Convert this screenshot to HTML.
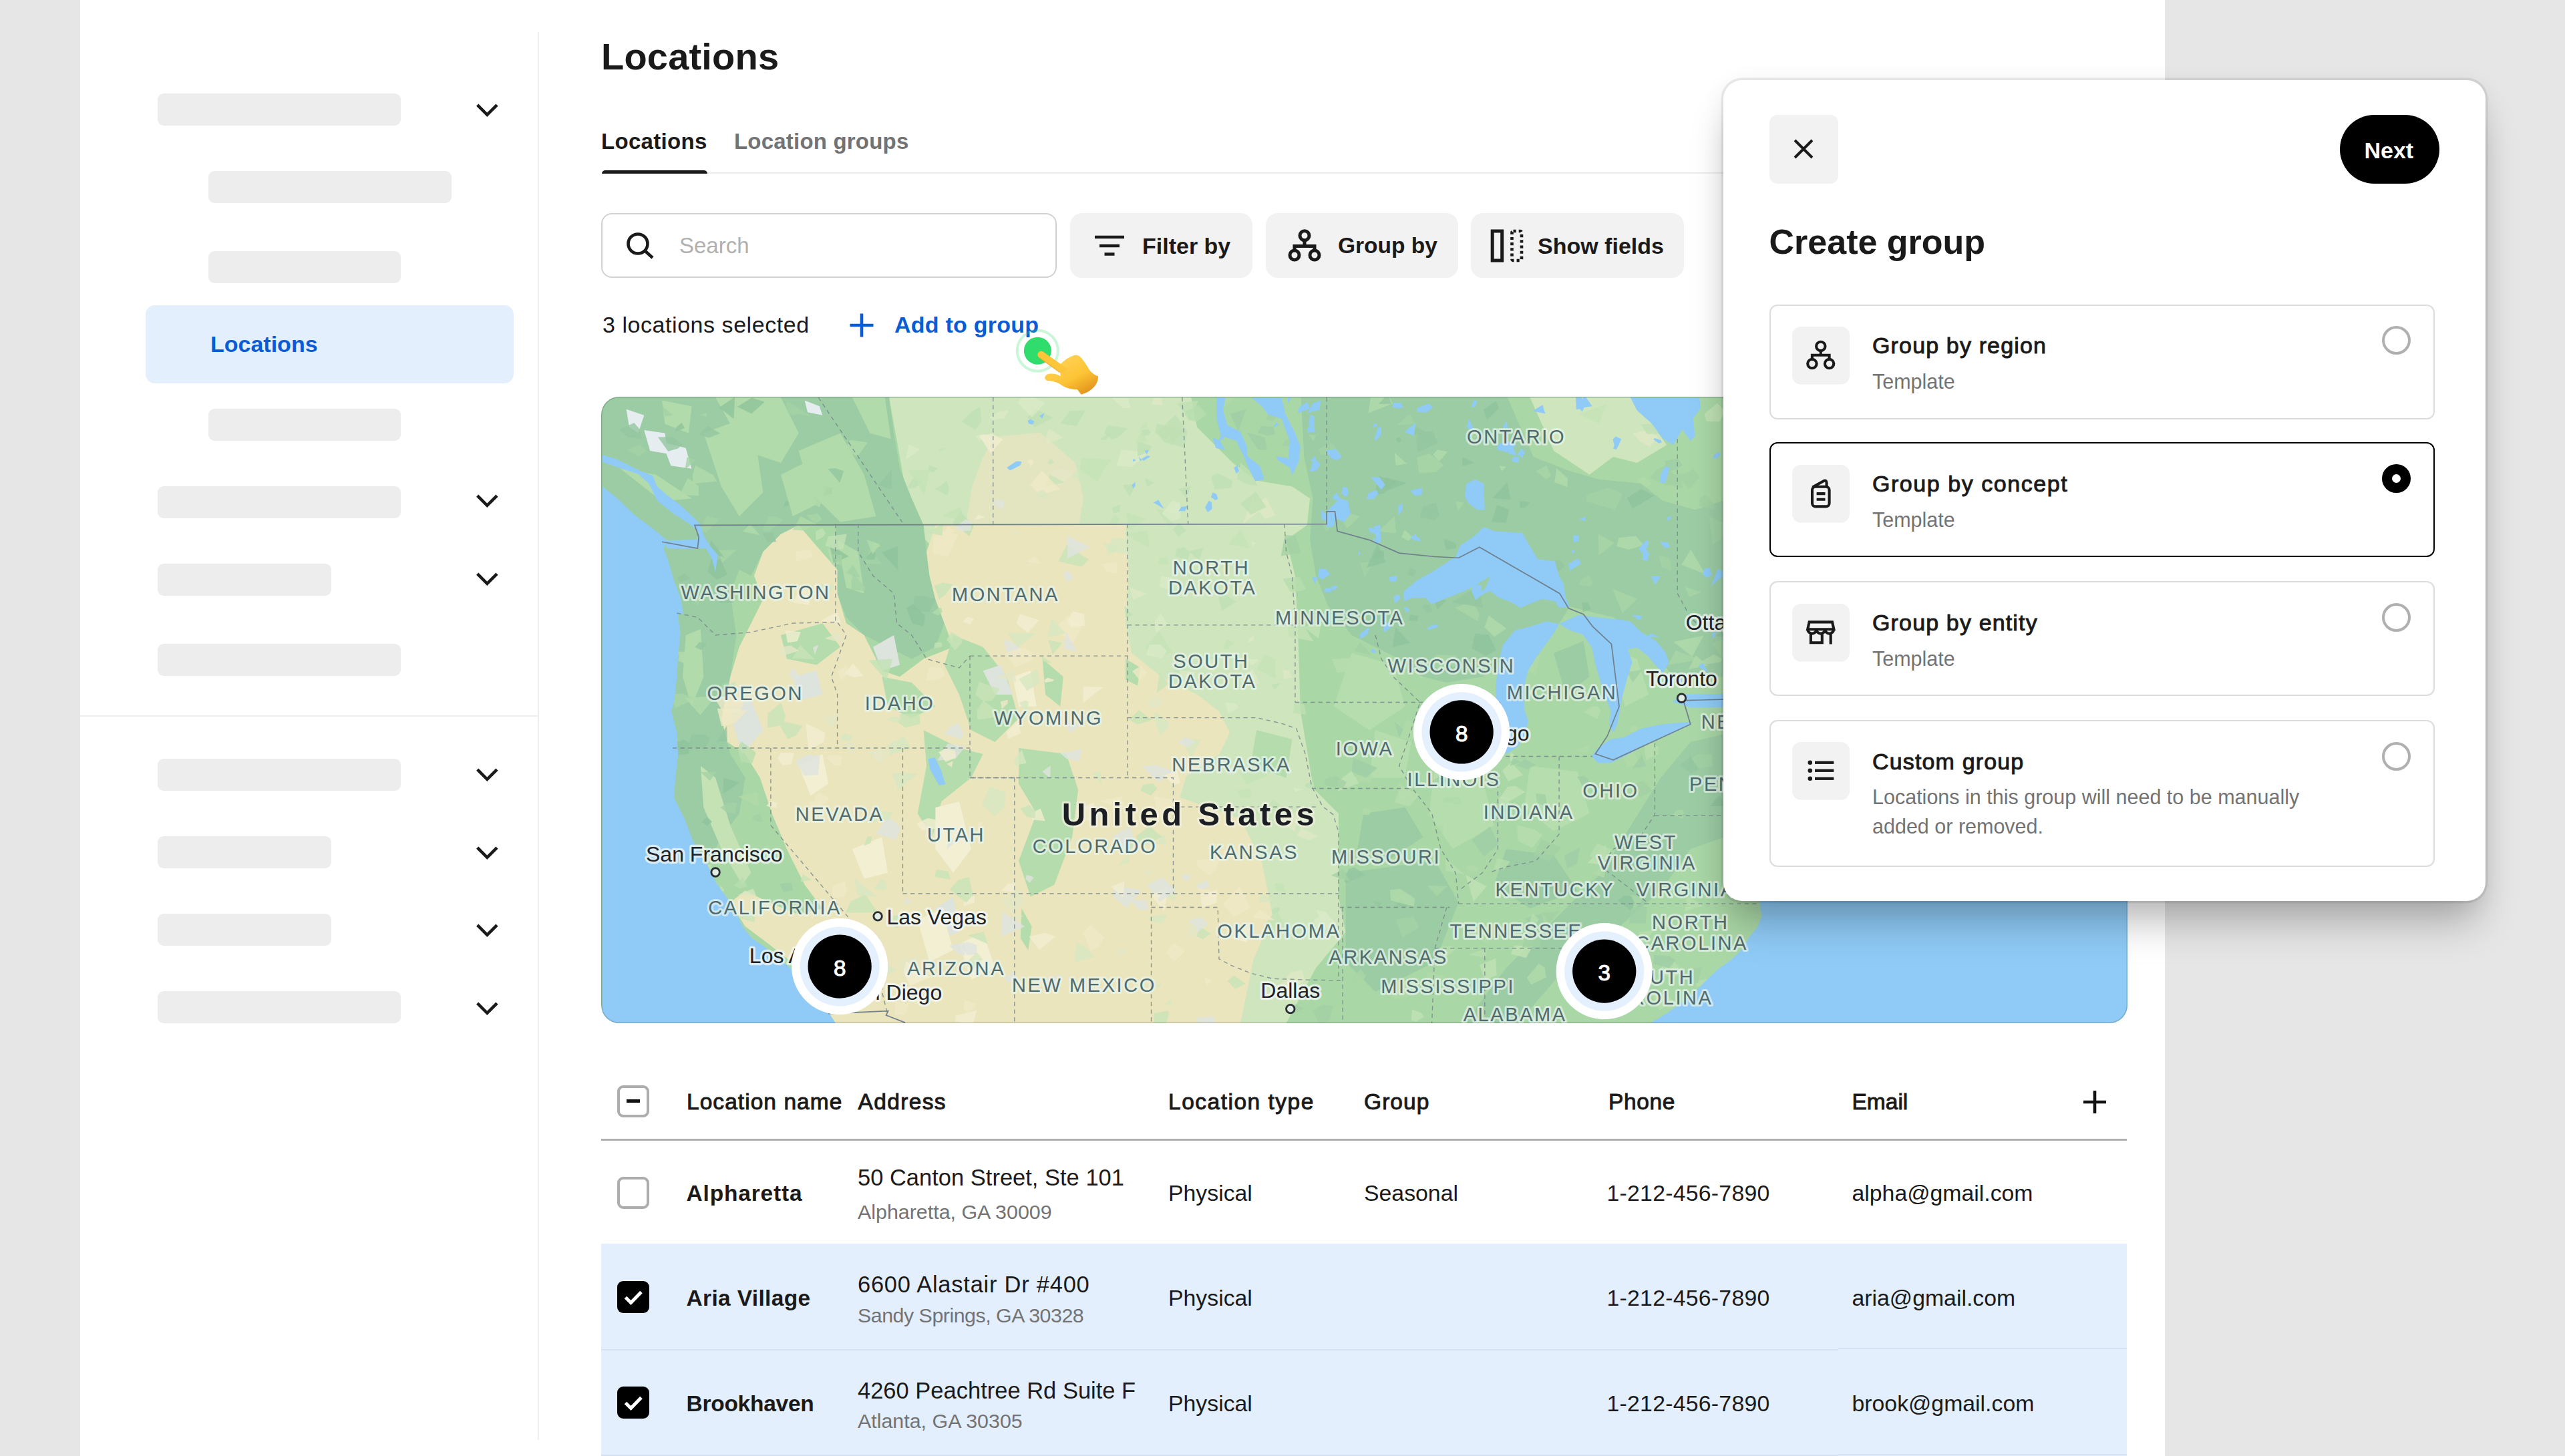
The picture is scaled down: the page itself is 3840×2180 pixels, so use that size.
<!DOCTYPE html>
<html lang="en">
<head>
<meta charset="utf-8">
<title>Locations</title>
<style>
*{box-sizing:border-box;margin:0;padding:0}
html,body{width:3840px;height:2180px;overflow:hidden}
body{background:#e6e6e6;font-family:"Liberation Sans",sans-serif;color:#1a1a1a;position:relative}
.abs{position:absolute}
.t{position:absolute;white-space:nowrap;line-height:1}
.b{font-weight:700}
#panel{left:120px;top:0;width:3121px;height:2180px;background:#fff}
.sk{position:absolute;height:48px;background:#ededed;border-radius:9px}
.chev{position:absolute;left:712px;width:36px;height:24px}
#navsel{left:218px;top:457px;width:551px;height:117px;background:#e4effe;border-radius:14px}
#vline{left:805.3px;top:48px;width:2px;height:2108px;background:#efefef}
#hline{left:120px;top:1071px;width:687px;height:2px;background:#ededed}
.btn{position:absolute;top:318.5px;height:97px;background:#f2f2f2;border-radius:18px}
.row{position:absolute;left:900px;width:2284px}
.sel{background:#e4effe}
.cb{position:absolute;left:923.5px;width:48px;height:48px;border-radius:9px}
.cb.off{border:4px solid #adadad;background:#fff}
.cb.on{background:#000}
.c1{font-size:34.5px}
.c2{font-size:30.4px;color:#737373}
.card{position:absolute;left:2649px;width:996px;border:2.4px solid #dcdcdc;border-radius:12px;background:#fff}
.ibox{position:absolute;left:2683px;width:85.5px;height:84.5px;background:#f2f2f2;border-radius:13px;box-shadow:0 1.5px 0 rgba(0,0,0,0.06)}
.ibox svg{position:absolute;left:0;top:0;width:85.5px;height:85.5px}
.radio{position:absolute;left:3566px;width:43px;height:43px;border-radius:50%;border:4px solid #b0b0b0;background:#fff}
.hd{font-size:33.5px;font-weight:400;-webkit-text-stroke:0.95px #1a1a1a}
.nm{font-size:33.5px}
.cv{font-size:33.8px}
.ct{font-size:34px;font-weight:400;letter-spacing:1.15px;-webkit-text-stroke:0.95px #1a1a1a}
.cs{font-size:30.5px;color:#737373}
</style>
</head>
<body>
<div id="panel" class="abs"></div>

<!-- SIDEBAR -->
<div id="sidebar">
<div class="sk" style="left:236px;top:140px;width:364px"></div>
<div class="sk" style="left:312px;top:256px;width:364px"></div>
<div class="sk" style="left:312px;top:376px;width:288px"></div>
<div id="navsel" class="abs"></div>
<div class="t b" style="left:315px;top:498px;font-size:34px;color:#0a5cd6">Locations</div>
<div class="sk" style="left:312px;top:612px;width:288px"></div>
<div class="sk" style="left:236px;top:728px;width:364px"></div>
<div class="sk" style="left:236px;top:844px;width:260px"></div>
<div class="sk" style="left:236px;top:964px;width:364px"></div>
<div id="hline" class="abs"></div>
<div class="sk" style="left:236px;top:1136px;width:364px"></div>
<div class="sk" style="left:236px;top:1252px;width:260px"></div>
<div class="sk" style="left:236px;top:1368px;width:260px"></div>
<div class="sk" style="left:236px;top:1484px;width:364px"></div>
<svg class="chev" style="top:153px" viewBox="0 0 36 24"><path d="M2.7 4.1 L17.3 18.8 L32 4.1" fill="none" stroke="#1a1a1a" stroke-width="4.6"/></svg>
<svg class="chev" style="top:738px" viewBox="0 0 36 24"><path d="M2.7 4.1 L17.3 18.8 L32 4.1" fill="none" stroke="#1a1a1a" stroke-width="4.6"/></svg>
<svg class="chev" style="top:855px" viewBox="0 0 36 24"><path d="M2.7 4.1 L17.3 18.8 L32 4.1" fill="none" stroke="#1a1a1a" stroke-width="4.6"/></svg>
<svg class="chev" style="top:1148px" viewBox="0 0 36 24"><path d="M2.7 4.1 L17.3 18.8 L32 4.1" fill="none" stroke="#1a1a1a" stroke-width="4.6"/></svg>
<svg class="chev" style="top:1265px" viewBox="0 0 36 24"><path d="M2.7 4.1 L17.3 18.8 L32 4.1" fill="none" stroke="#1a1a1a" stroke-width="4.6"/></svg>
<svg class="chev" style="top:1381px" viewBox="0 0 36 24"><path d="M2.7 4.1 L17.3 18.8 L32 4.1" fill="none" stroke="#1a1a1a" stroke-width="4.6"/></svg>
<svg class="chev" style="top:1498px" viewBox="0 0 36 24"><path d="M2.7 4.1 L17.3 18.8 L32 4.1" fill="none" stroke="#1a1a1a" stroke-width="4.6"/></svg>
<div id="vline" class="abs"></div>
</div>

<!-- HEADER -->
<div class="t b" style="left:900px;top:57px;font-size:56px;letter-spacing:0.2px">Locations</div>
<div class="t b" style="left:900px;top:195px;font-size:33px;letter-spacing:0.3px">Locations</div>
<div class="t b" style="left:1099px;top:195px;font-size:33px;letter-spacing:0.2px;color:#737373">Location groups</div>
<div class="abs" style="left:902px;top:258px;width:2339px;height:2px;background:#ededed"></div>
<div class="abs" style="left:901px;top:255px;width:158px;height:5px;background:#1a1a1a;border-radius:5px 5px 0 0"></div>

<!-- TOOLBAR -->
<div class="abs" style="left:900px;top:318.5px;width:682px;height:97px;border:2px solid #d1d1d1;border-radius:16px;background:#fff"></div>
<div class="t" style="left:1017px;top:351px;font-size:33px;color:#b0b0b0">Search</div>
<div class="btn" style="left:1602px;width:273px"></div>
<div class="t b" style="left:1710px;top:351px;font-size:34px">Filter by</div>
<div class="btn" style="left:1895px;width:288px"></div>
<div class="t b" style="left:2003px;top:351px;font-size:33.5px">Group by</div>
<div class="btn" style="left:2202px;width:319px"></div>
<div class="t b" style="left:2302px;top:351px;font-size:34px">Show fields</div>


<svg class="abs" style="left:930px;top:340px;width:56px;height:56px" viewBox="0 0 56 56"><circle cx="25" cy="25" r="14.5" fill="none" stroke="#1a1a1a" stroke-width="4.6"/><path d="M35.5 35.5 L47 46" stroke="#1a1a1a" stroke-width="4.6" fill="none"/></svg>
<svg class="abs" style="left:1639px;top:350px;width:44px;height:36px" viewBox="0 0 44 36"><path d="M0 5H44M7 18H37M14.5 30.5H29.5" stroke="#1a1a1a" stroke-width="4.4" fill="none"/></svg>
<svg class="abs" style="left:1926.5px;top:341.5px;width:52px;height:52px" viewBox="0 0 52 52"><g fill="none" stroke="#1a1a1a" stroke-width="5"><circle cx="26" cy="10.7" r="7"/><circle cx="11" cy="40" r="7"/><circle cx="41" cy="40" r="7"/><path d="M26 17.7V26.5M11 33V26.5H41V33"/></g></svg>
<svg class="abs" style="left:2231px;top:343px;width:52px;height:52px" viewBox="0 0 52 52"><g fill="none" stroke="#1a1a1a"><rect x="3.2" y="3" width="14.5" height="44" stroke-width="5"/><rect x="32.5" y="3" width="14.5" height="44" rx="2" stroke-width="4.6" stroke-dasharray="4.2 4"/></g></svg>
<svg class="abs" style="left:1270px;top:467px;width:40px;height:40px" viewBox="0 0 40 40"><path d="M20 2.5V37.5M2.5 20H37.5" stroke="#0a5cd6" stroke-width="4.6" fill="none"/></svg>
<div class="t" style="left:902px;top:469px;font-size:34px;letter-spacing:0.55px">3 locations selected</div>
<div class="t b" style="left:1339px;top:469px;font-size:34px;letter-spacing:0.25px;color:#0a5cd6">Add to group</div>

<svg class="abs" style="left:1490px;top:450px;width:200px;height:150px" viewBox="0 0 1941 1456">
<defs><linearGradient id="hg" x1="0.2" y1="0" x2="0.9" y2="1"><stop offset="0" stop-color="#ffd45a"/><stop offset="0.55" stop-color="#fdc436"/><stop offset="1" stop-color="#de8a16"/></linearGradient></defs>
<circle cx="615" cy="730" r="296" fill="none" stroke="#30dc6b" stroke-opacity="0.25" stroke-width="40"/>
<circle cx="615" cy="730" r="199" fill="#30dc6b"/>
<path d="M930 945C980 880 1090 800 1170 790C1230 790 1270 850 1340 960C1380 1040 1440 1080 1495 1100C1500 1200 1420 1320 1250 1365L1190 1290C1120 1295 1020 1270 950 1220C900 1185 830 1170 760 1165C700 1150 710 1080 780 1065C850 1055 900 1070 950 1100Z" fill="url(#hg)"/>
<path d="M668 788L980 1010" stroke="#fcc53a" stroke-width="106" stroke-linecap="round" fill="none"/>
<path d="M640 830L930 1040" stroke="#e59a1f" stroke-width="14" stroke-linecap="round" fill="none" opacity="0.55"/>
</svg>
<!-- MAP -->
<div id="map" class="abs" style="left:900px;top:594px;width:2285px;height:938px;border-radius:27px;overflow:hidden;background:#9ccca4">
<svg width="2283" height="937" viewBox="0 0 2565 1053" preserveAspectRatio="none" font-family="Liberation Sans, sans-serif" style="position:absolute;left:2px;top:1px"><rect width="2565" height="1053" fill="#a9d7a6"/>
<path d="M482 0 L990 0 L1000 50 L1060 110 L1100 140 L1160 150 L1190 170 L1185 215 L1150 240 L1165 300 L1170 400 L1174 528 L1196 658 L1238 700 L1238 840 L1250 900 L1200 960 L1150 1053 L1000 1053 L900 600 L600 300 L520 215 L500 100Z" fill="#cfe5be" />
<path d="M1522 0 L1566 100 L1624 123 L1675 138 L1747 145 L1783 174 L1838 189 L1885 174 L2000 174 L2000 0Z" fill="#a9d7a6" />
<path d="M1560 0 L1729 0 L1765 44 L1790 80 L1740 110 L1700 100 L1660 130 L1600 90Z" fill="#cfe5be" />
<path d="M0 0 L482 0 L490 60 L500 120 L520 170 L540 215 L545 260 L550 300 L560 340 L575 380 L560 420 L520 440 L480 420 L440 400 L410 370 L395 330 L392 215 L330 215 L300 230 L270 260 L250 300 L230 290 L215 330 L225 400 L215 470 L200 540 L215 600 L240 640 L230 700 L200 740 L175 790 L0 800Z" fill="#9ccca4" />
<path d="M240 640 L265 640 L290 700 L315 760 L345 820 L330 830 L290 780 L260 720Z" fill="#a9d7a6" />
<path d="M1175 0 L1522 0 L1566 100 L1624 123 L1675 138 L1747 145 L1783 174 L1838 189 L1885 174 L2000 174 L2000 470 L1800 470 L1750 400 L1700 370 L1627 352 L1609 381 L1580 400 L1540 390 L1518 417 L1508 453 L1480 470 L1420 480 L1380 470 L1340 440 L1300 420 L1260 400 L1220 350 L1200 300 L1190 240 L1195 170 L1180 100Z" fill="#9ccca4" />
<path d="M2000 540 L2000 700 L1830 760 L1780 830 L1700 900 L1620 960 L1540 1053 L1450 1053 L1520 960 L1600 880 L1680 800 L1730 720 L1780 640 L1830 580Z" fill="#9ccca4" />
<path d="M1250 800 L1400 780 L1440 850 L1400 950 L1300 1000 L1250 950Z" fill="#9ccca4" />
<path d="M611 213 L622 150 L640 100 L662 66 L736 59 L795 110 L809 169 L802 213Z" fill="#e3e5c0" />
<path d="M560 215 L880 215 L885 300 L880 380 L890 430 L940 470 L1000 500 L1037 528 L1055 564 L1037 601 L982 637 L971 673 L1073 709 L1109 782 L1120 836 L1127 873 L1095 945 L1084 1000 L1073 1053 L392 1053 L330 960 L280 920 L240 890 L215 850 L240 830 L280 850 L330 870 L370 860 L340 820 L310 760 L285 700 L265 640 L240 600 L210 580 L200 540 L215 470 L230 420 L250 380 L270 340 L255 300 L270 260 L300 230 L330 215 L360 250 L395 290 L395 330 L410 380 L440 400 L470 460 L500 470 L540 440 L590 420 L575 380 L560 340 L550 300 L545 260 L560 215Z" fill="#ebe5bd" />
<path d="M590 400 L640 420 L680 470 L700 540 L660 580 L620 560 L600 500 L575 450Z" fill="#b4dcac" />
<path d="M740 440 L775 470 L770 520 L745 500Z" fill="#b4dcac" />
<path d="M540 560 L600 590 L640 600 L620 640 L570 680 L555 740 L530 700 L545 620Z" fill="#b4dcac" />
<path d="M700 590 L780 600 L800 660 L790 740 L760 820 L720 840 L700 780 L730 700 L700 650Z" fill="#b4dcac" />
<path d="M705 860 L722 890 L716 930 L703 910Z" fill="#b4dcac" />
<path d="M300 400 L370 380 L400 420 L360 450 L310 440Z" fill="#b4dcac" />
<path d="M880 440 L905 455 L900 485 L880 475Z" fill="#b4dcac" />
<path d="M470 470 L520 480 L560 520 L520 540 L480 520Z" fill="#b4dcac" />
<path d="M1100 560 L1160 575 L1150 640 L1090 620Z" fill="#b4dcac" />
<path d="M210 520 L250 510 L270 560 L235 600Z" fill="#dde3dd" />
<path d="M320 470 L360 460 L370 500 L330 510Z" fill="#dde3dd" />
<path d="M455 420 L490 400 L500 450 L470 460Z" fill="#dde3dd" />
<path d="M640 460 L670 450 L690 500 L660 500Z" fill="#dde3dd" />
<path d="M560 860 L590 840 L600 900 L570 910Z" fill="#dde3dd" />
<path d="M330 620 L370 600 L380 650 L350 670Z" fill="#f2efd2" />
<path d="M420 760 L470 740 L480 800 L440 810Z" fill="#f2efd2" />
<path d="M560 690 L600 680 L620 760 L590 800 L560 760Z" fill="#f2efd2" />
<path d="M530 880 L570 860 L590 930 L550 950Z" fill="#f2efd2" />
<path d="M600 920 L640 900 L660 960 L620 980Z" fill="#f2efd2" />
<path d="M690 470 L720 460 L730 520 L700 520Z" fill="#f2efd2" />
<path d="M40 20 L70 30 L60 60 L45 50Z" fill="#e6edf0" />
<path d="M70 55 L105 60 L110 95 L80 90Z" fill="#e6edf0" />
<path d="M100 75 L140 85 L150 120 L115 115Z" fill="#e6edf0" />
<path d="M340 5 L365 15 L370 30 L345 25Z" fill="#e6edf0" />
<path d="M100 5 L150 15 L145 60 L105 45Z" fill="#b2dbab" />
<path d="M170 60 L225 40 L260 90 L270 160 L230 200 L200 150Z" fill="#b2dbab" />
<path d="M300 130 L340 110 L360 180 L320 200Z" fill="#b2dbab" />
<path d="M395 240 L430 260 L440 330 L410 320Z" fill="#b2dbab" />
<path d="M140 400 L165 390 L170 470 L150 520 L135 470Z" fill="#b2dbab" />
<path d="M190 0 L300 0 L330 60 L300 110 L240 90Z" fill="#b2dbab" />
<path d="M330 90 L400 60 L440 130 L460 200 L400 210 L350 160Z" fill="#b2dbab" />
<path d="M30 120 L90 130 L150 170 L100 175Z" fill="#b2dbab" />
<path d="M420 0 L475 0 L485 70 L450 60Z" fill="#b2dbab" />
<path d="M165 620 L190 640 L215 720 L250 800 L235 820 L200 760 L170 690Z" fill="#c4e2b4" />
<path d="M1260 430 L1330 450 L1350 520 L1290 560 L1230 520Z" fill="#b6ddae" />
<path d="M1400 620 L1480 640 L1500 720 L1430 760 L1390 700Z" fill="#b6ddae" />
<path d="M1560 620 L1640 630 L1660 700 L1600 730 L1550 690Z" fill="#b6ddae" />
<path d="M1690 420 L1740 440 L1760 500 L1720 520Z" fill="#b6ddae" />
<path d="M1300 560 L1360 580 L1350 640 L1290 640Z" fill="#b6ddae" />
<path d="M1520 760 L1600 770 L1640 830 L1560 860 L1500 820Z" fill="#9ccca4" />
<path d="M1280 700 L1350 690 L1380 740 L1320 780 L1270 760Z" fill="#9ccca4" />
<path d="M1600 430 L1650 410 L1660 470 L1620 500Z" fill="#9ccca4" />
<path d="M1420 520 L1480 500 L1500 560 L1440 580Z" fill="#9ccca4" />
<path d="M281.0 680.9 L283.4 678.6 L293.9 682.6 L292.4 690.6 L275.5 687.8Z" fill="#f1eed1" opacity="0.8"/>
<path d="M403.1 582.0 L422.0 578.8 L428.1 589.1 L420.4 600.6Z" fill="#e3e6c6" opacity="0.8"/>
<path d="M1179.9 516.8 L1183.9 533.9 L1161.9 531.2 L1163.6 512.7Z" fill="#bfe0b4" opacity="0.8"/>
<path d="M1142.8 81.3 L1147.6 72.4 L1158.6 68.5 L1156.5 82.9Z" fill="#a2d1a4" opacity="0.8"/>
<path d="M923.6 839.1 L953.2 819.9 L944.7 864.4Z" fill="#f1eed1" opacity="0.8"/>
<path d="M721.1 698.6 L736.8 691.9 L744.6 712.7 L722.9 710.4Z" fill="#f1eed1" opacity="0.8"/>
<path d="M512.3 152.7 L521.8 137.5 L525.9 136.3 L537.1 142.4 L526.4 152.3Z" fill="#bfe0b4" opacity="0.8"/>
<path d="M782.3 367.9 L806.6 386.3 L791.1 414.0 L761.2 388.9Z" fill="#efe9c6" opacity="0.8"/>
<path d="M760.0 109.7 L752.7 113.2 L748.2 109.4 L754.3 102.8Z" fill="#c9e3b8" opacity="0.8"/>
<path d="M1648.8 652.6 L1639.0 638.2 L1651.9 636.9 L1658.2 642.2 L1659.3 652.1Z" fill="#9fcea6" opacity="0.8"/>
<path d="M311.3 26.0 L330.2 16.3 L328.3 27.3 L320.3 30.2Z" fill="#a4d2a5" opacity="0.8"/>
<path d="M1017.9 812.4 L1020.0 824.8 L1006.6 827.6 L998.1 824.6 L1000.0 819.1Z" fill="#dfe4de" opacity="0.8"/>
<path d="M480.2 705.0 L501.8 722.6 L493.6 744.5 L459.5 734.0Z" fill="#dfe4de" opacity="0.8"/>
<path d="M1215.2 866.0 L1233.0 883.2 L1206.7 902.7 L1196.1 880.6Z" fill="#d9eac8" opacity="0.8"/>
<path d="M1449.0 177.3 L1438.8 190.5 L1435.1 174.9Z" fill="#a9d6a6" opacity="0.8"/>
<path d="M250.7 27.5 L237.6 21.1 L226.8 15.7 L251.0 0.6 L272.7 7.6Z" fill="#8fc39b" opacity="0.8"/>
<path d="M1411.7 939.0 L1404.8 950.3 L1394.6 953.7 L1381.2 951.2 L1391.1 934.9Z" fill="#a4d2a5" opacity="0.8"/>
<path d="M1065.8 343.8 L1041.5 359.7 L1033.3 322.6Z" fill="#bfe0b4" opacity="0.8"/>
<path d="M613.0 1036.3 L606.9 1025.9 L609.3 1014.0 L629.4 1020.8 L620.6 1030.2Z" fill="#efe9c6" opacity="0.8"/>
<path d="M775.6 422.2 L780.2 394.2 L798.5 428.7Z" fill="#dfe4de" opacity="0.8"/>
<path d="M486.6 154.7 L463.2 148.3 L486.3 120.9Z" fill="#93c69f" opacity="0.8"/>
<path d="M788.2 387.4 L782.2 374.1 L790.8 360.0 L809.6 364.5 L811.4 384.1Z" fill="#f1eed1" opacity="0.8"/>
<path d="M530.9 939.8 L526.1 966.2 L504.3 969.6 L497.8 947.7Z" fill="#e3e6c6" opacity="0.8"/>
<path d="M1504.8 181.3 L1525.3 188.5 L1519.5 211.1 L1495.3 209.4Z" fill="#8fc39b" opacity="0.8"/>
<path d="M541.2 163.4 L514.1 122.1 L550.3 122.8Z" fill="#c4e2b6" opacity="0.8"/>
<path d="M511.0 841.6 L521.0 849.6 L506.3 853.2Z" fill="#dfe4de" opacity="0.8"/>
<path d="M940.0 885.9 L920.4 880.8 L918.5 873.5 L948.4 870.2 L948.7 874.3Z" fill="#d6e7c0" opacity="0.8"/>
<path d="M858.1 71.6 L843.7 60.1 L850.0 47.0 L883.3 52.1 L870.0 65.0Z" fill="#bfe0b4" opacity="0.8"/>
<path d="M605.6 376.9 L614.7 368.8 L624.5 372.5 L618.2 382.4Z" fill="#f1eed1" opacity="0.8"/>
<path d="M580.7 268.1 L556.0 261.9 L556.1 235.1 L570.5 224.8 L598.2 230.8Z" fill="#efe9c6" opacity="0.8"/>
<path d="M960.6 445.1 L977.3 431.2 L998.4 452.3 L974.4 462.4 L963.0 470.6Z" fill="#c4e2b6" opacity="0.8"/>
<path d="M743.4 475.6 L748.7 471.3 L759.8 475.3 L756.7 478.0 L744.3 479.9Z" fill="#f1eed1" opacity="0.8"/>
<path d="M1702.1 244.8 L1675.7 265.9 L1674.7 230.0Z" fill="#a9d6a6" opacity="0.8"/>
<path d="M141.7 164.4 L131.3 160.8 L143.7 135.4 L161.8 149.4 L162.1 165.6Z" fill="#b2dbab" opacity="0.8"/>
<path d="M1860.3 978.2 L1860.1 987.9 L1839.6 992.1 L1839.3 981.4Z" fill="#b6ddae" opacity="0.8"/>
<path d="M1784.1 117.7 L1813.8 136.1 L1817.1 153.1 L1782.6 145.1Z" fill="#a2d1a4" opacity="0.8"/>
<path d="M642.2 346.4 L644.6 328.4 L660.1 335.1Z" fill="#dfe4de" opacity="0.8"/>
<path d="M744.7 901.1 L762.3 906.9 L734.6 929.8 L717.6 907.0Z" fill="#f1eed1" opacity="0.8"/>
<path d="M1451.4 803.1 L1486.9 822.9 L1465.3 848.3Z" fill="#c2e2b5" opacity="0.8"/>
<path d="M1427.9 673.7 L1426.5 683.3 L1411.3 680.8 L1416.5 672.7Z" fill="#b0dba9" opacity="0.8"/>
<path d="M1051.9 423.7 L1044.3 424.0 L1049.5 407.7 L1053.4 409.0 L1061.6 412.7Z" fill="#c4e2b6" opacity="0.8"/>
<path d="M450.0 254.2 L469.7 281.0 L440.8 279.7Z" fill="#a4d2a5" opacity="0.8"/>
<path d="M1835.0 121.2 L1845.7 134.5 L1828.3 154.1 L1804.5 130.3 L1819.4 127.8Z" fill="#a2d1a4" opacity="0.8"/>
<path d="M1657.6 922.5 L1615.7 901.5 L1667.4 890.0Z" fill="#93c69f" opacity="0.8"/>
<path d="M258.0 597.6 L251.7 616.3 L232.5 612.8 L227.5 590.4 L233.4 578.9Z" fill="#b6ddae" opacity="0.8"/>
<path d="M1026.4 1040.8 L1037.8 1061.3 L1002.2 1055.8 L998.2 1043.7Z" fill="#dfe4de" opacity="0.8"/>
<path d="M805.6 284.9 L766.9 276.0 L780.8 248.4 L817.7 272.7Z" fill="#c9e3b8" opacity="0.8"/>
<path d="M1828.2 335.9 L1820.4 318.6 L1848.5 327.8Z" fill="#a9d6a6" opacity="0.8"/>
<path d="M100.5 15.0 L119.2 29.7 L104.4 32.1Z" fill="#a4d2a5" opacity="0.8"/>
<path d="M348.7 700.9 L347.7 680.5 L354.5 680.3 L368.6 677.0 L368.1 699.2Z" fill="#efe9c6" opacity="0.8"/>
<path d="M713.3 803.1 L725.6 807.4 L718.8 816.7 L711.5 810.4Z" fill="#dfe4de" opacity="0.8"/>
<path d="M778.5 396.4 L748.7 403.8 L756.1 371.5Z" fill="#d6e7c0" opacity="0.8"/>
<path d="M1414.4 719.9 L1414.7 727.8 L1412.4 732.0 L1401.7 722.1Z" fill="#b0dba9" opacity="0.8"/>
<path d="M477.9 476.6 L447.6 442.6 L488.1 440.1Z" fill="#c2e2b5" opacity="0.8"/>
<path d="M682.3 818.2 L692.1 817.2 L694.8 832.7 L670.7 830.4 L676.9 823.2Z" fill="#f1eed1" opacity="0.8"/>
<path d="M929.9 751.7 L945.8 735.3 L948.1 751.5Z" fill="#d6e7c0" opacity="0.8"/>
<path d="M593.3 608.2 L563.2 611.0 L580.4 582.8 L611.2 586.9Z" fill="#dfe4de" opacity="0.8"/>
<path d="M463.3 866.7 L409.1 867.0 L417.0 848.2 L442.1 836.5Z" fill="#c9e3b8" opacity="0.8"/>
<path d="M1136.6 992.0 L1157.7 967.1 L1177.1 963.7 L1180.8 979.9 L1166.6 992.7Z" fill="#dfe9c4" opacity="0.8"/>
<path d="M1114.4 699.2 L1126.9 676.4 L1152.2 694.3Z" fill="#c4e2b6" opacity="0.8"/>
<path d="M1495.3 690.7 L1521.6 692.4 L1514.2 701.4 L1498.3 717.3 L1495.0 702.3Z" fill="#9fcea6" opacity="0.8"/>
<path d="M1525.5 675.0 L1524.5 682.4 L1508.4 687.2 L1507.6 674.4 L1511.3 671.2Z" fill="#c2e2b5" opacity="0.8"/>
<path d="M802.2 612.2 L780.2 607.9 L769.6 598.5 L794.6 594.1 L806.5 590.9Z" fill="#dfe4de" opacity="0.8"/>
<path d="M952.8 44.0 L978.5 56.1 L956.5 81.4Z" fill="#bfe0b4" opacity="0.8"/>
<path d="M359.4 240.9 L358.3 225.8 L369.7 219.8 L375.7 228.9 L370.3 235.3Z" fill="#c2e2b5" opacity="0.8"/>
<path d="M1588.5 823.6 L1599.3 811.8 L1621.2 814.3 L1619.2 832.8Z" fill="#93c69f" opacity="0.8"/>
<path d="M870.6 192.5 L859.8 194.8 L856.4 186.2 L870.4 180.5Z" fill="#bfe0b4" opacity="0.8"/>
<path d="M978.9 84.2 L945.1 75.6 L932.4 59.4 L963.5 29.1 L984.0 57.4Z" fill="#bfe0b4" opacity="0.8"/>
<path d="M1761.8 82.8 L1746.6 75.5 L1732.4 60.4 L1754.9 55.5 L1775.9 65.3Z" fill="#dfe9c4" opacity="0.8"/>
<path d="M334.8 173.9 L338.2 165.2 L353.4 156.5 L357.4 167.6 L348.9 184.0Z" fill="#b2dbab" opacity="0.8"/>
<path d="M1023.1 902.1 L1010.2 911.4 L999.0 906.6 L1004.9 890.8Z" fill="#c9e3b8" opacity="0.8"/>
<path d="M1210.6 1021.5 L1229.0 1023.5 L1223.2 1047.9 L1206.6 1055.4 L1194.6 1032.5Z" fill="#a2d1a4" opacity="0.8"/>
<path d="M1064.9 315.8 L1075.5 311.1 L1085.8 313.9 L1076.8 325.0 L1066.5 329.4Z" fill="#dfe9c4" opacity="0.8"/>
<path d="M650.8 654.5 L678.0 664.0 L675.9 690.3 L659.7 704.6 L638.0 685.6Z" fill="#d6e7c0" opacity="0.8"/>
<path d="M278.8 200.9 L288.2 199.6 L304.6 206.6 L278.7 225.9 L269.3 223.5Z" fill="#a4d2a5" opacity="0.8"/>
<path d="M885.7 783.3 L867.6 787.1 L884.2 769.4Z" fill="#d6e7c0" opacity="0.8"/>
<path d="M478.8 584.9 L507.4 570.2 L515.2 582.1 L517.0 590.2 L483.6 602.0Z" fill="#d6e7c0" opacity="0.8"/>
<path d="M630.0 921.9 L628.7 937.0 L613.0 938.6 L603.1 923.8 L613.3 915.9Z" fill="#dfe4de" opacity="0.8"/>
<path d="M584.8 219.8 L593.1 226.1 L580.3 228.1 L576.8 224.9 L581.1 215.1Z" fill="#efe9c6" opacity="0.8"/>
<path d="M1404.6 66.6 L1391.3 80.3 L1382.7 69.9 L1388.3 63.4Z" fill="#a4d2a5" opacity="0.8"/>
<path d="M1773.8 968.9 L1789.4 947.2 L1802.9 949.4 L1818.2 966.4 L1800.4 977.6Z" fill="#b6ddae" opacity="0.8"/>
<path d="M1548.1 635.5 L1523.6 645.8 L1513.3 627.8 L1528.6 613.9Z" fill="#c2e2b5" opacity="0.8"/>
<path d="M1552.7 174.9 L1560.0 177.2 L1551.5 185.8 L1543.3 185.5 L1542.9 174.6Z" fill="#8fc39b" opacity="0.8"/>
<path d="M571.7 232.5 L545.7 227.2 L572.5 212.6Z" fill="#c9e3b8" opacity="0.8"/>
<path d="M749.7 408.2 L773.5 412.9 L757.1 433.0Z" fill="#c9e3b8" opacity="0.8"/>
<path d="M1771.2 123.4 L1790.9 111.9 L1806.6 142.7 L1790.9 149.0 L1761.9 134.8Z" fill="#a2d1a4" opacity="0.8"/>
<path d="M866.2 942.1 L866.0 934.1 L868.4 925.6 L879.5 928.5 L880.3 935.0Z" fill="#e3e6c6" opacity="0.8"/>
<path d="M1466.9 109.9 L1446.5 115.4 L1445.7 100.3Z" fill="#8fc39b" opacity="0.8"/>
<path d="M715.0 33.6 L726.5 19.0 L757.7 33.9 L726.6 49.9Z" fill="#bfe0b4" opacity="0.8"/>
<path d="M1436.8 434.3 L1431.2 458.1 L1409.5 458.8 L1394.4 449.3 L1401.7 433.0Z" fill="#a9d6a6" opacity="0.8"/>
<path d="M1362.2 669.2 L1341.9 679.8 L1336.0 657.4 L1340.5 647.0Z" fill="#b0dba9" opacity="0.8"/>
<path d="M226.1 256.2 L201.4 278.2 L193.9 257.5Z" fill="#a9d6a6" opacity="0.8"/>
<path d="M1483.3 386.8 L1490.7 366.8 L1520.5 388.7 L1500.1 402.9Z" fill="#b2dbab" opacity="0.8"/>
<path d="M110.3 90.8 L93.2 66.9 L116.8 66.6 L134.2 79.2 L126.9 86.1Z" fill="#93c69f" opacity="0.8"/>
<path d="M1525.4 680.0 L1509.1 673.8 L1522.5 655.3 L1534.9 653.4 L1551.9 664.0Z" fill="#c2e2b5" opacity="0.8"/>
<path d="M1602.9 285.6 L1602.7 274.8 L1609.9 273.6 L1618.8 282.9 L1608.0 292.8Z" fill="#93c69f" opacity="0.8"/>
<path d="M1769.9 895.8 L1749.0 919.6 L1742.4 900.1Z" fill="#b6ddae" opacity="0.8"/>
<path d="M1303.9 270.3 L1295.7 271.0 L1302.3 257.9 L1313.9 257.8 L1315.3 267.7Z" fill="#8fc39b" opacity="0.8"/>
<path d="M1551.3 876.7 L1579.5 868.8 L1583.5 882.7 L1571.6 899.4Z" fill="#9fcea6" opacity="0.8"/>
<path d="M875.1 147.6 L897.0 146.2 L886.8 167.2Z" fill="#bfe0b4" opacity="0.8"/>
<path d="M741.5 444.5 L737.0 433.7 L756.7 447.9Z" fill="#c9e3b8" opacity="0.8"/>
<path d="M910.6 802.1 L916.5 789.4 L923.3 804.2Z" fill="#e3e6c6" opacity="0.8"/>
<path d="M564.6 366.9 L554.1 362.4 L565.4 354.1 L570.0 354.3 L571.5 361.0Z" fill="#b2dbab" opacity="0.8"/>
<path d="M1893.2 420.9 L1883.3 439.4 L1865.7 413.4 L1896.4 404.2Z" fill="#a4d2a5" opacity="0.8"/>
<path d="M1162.2 656.1 L1176.2 659.6 L1164.3 664.3Z" fill="#d9eac8" opacity="0.8"/>
<path d="M578.8 760.8 L583.0 740.2 L593.7 747.6Z" fill="#dfe4de" opacity="0.8"/>
<path d="M1527.4 596.3 L1537.3 604.4 L1533.1 613.1 L1526.1 611.1Z" fill="#c2e2b5" opacity="0.8"/>
<path d="M1261.6 452.9 L1260.8 460.8 L1235.5 463.4 L1227.0 440.4 L1257.9 438.3Z" fill="#b6ddae" opacity="0.8"/>
<path d="M1305.8 132.2 L1336.0 142.0 L1313.7 161.5 L1297.8 164.3Z" fill="#8fc39b" opacity="0.8"/>
<path d="M170.9 313.8 L160.5 351.8 L141.1 327.9Z" fill="#a4d2a5" opacity="0.8"/>
<path d="M865.4 295.7 L848.7 293.2 L840.1 279.5 L864.6 277.8Z" fill="#efe9c6" opacity="0.8"/>
<path d="M797.3 917.5 L814.6 926.7 L826.8 941.1 L793.5 950.7Z" fill="#d6e7c0" opacity="0.8"/>
<path d="M1735.4 595.5 L1743.4 616.4 L1723.4 621.9 L1712.6 596.0 L1723.0 583.6Z" fill="#b0dba9" opacity="0.8"/>
<path d="M403.0 280.3 L385.8 281.5 L378.4 254.2 L398.7 257.6Z" fill="#b6ddae" opacity="0.8"/>
<path d="M342.9 198.1 L362.5 195.5 L369.5 205.4 L358.5 211.8 L351.9 207.3Z" fill="#a9d6a6" opacity="0.8"/>
<path d="M175.0 227.3 L164.1 223.9 L175.2 199.4 L196.9 204.7Z" fill="#a4d2a5" opacity="0.8"/>
<path d="M1873.4 402.0 L1880.3 389.4 L1887.2 402.4Z" fill="#8fc39b" opacity="0.8"/>
<path d="M1412.1 102.8 L1406.7 107.2 L1397.0 96.2 L1404.4 87.9 L1421.1 91.4Z" fill="#b2dbab" opacity="0.8"/>
<path d="M497.8 547.7 L500.9 532.6 L533.2 531.8 L534.4 549.4 L509.9 555.8Z" fill="#c9e3b8" opacity="0.8"/>
<path d="M729.6 397.1 L698.2 420.8 L681.1 396.0Z" fill="#d6e7c0" opacity="0.8"/>
<path d="M1181.3 386.2 L1196.0 410.8 L1154.2 402.3 L1153.0 381.0Z" fill="#c4e2b6" opacity="0.8"/>
<path d="M1375.1 201.9 L1379.9 183.1 L1402.4 176.9 L1406.9 197.8 L1401.1 206.5Z" fill="#93c69f" opacity="0.8"/>
<path d="M277.7 531.9 L300.3 514.1 L307.9 535.7 L303.5 551.1 L277.8 556.1Z" fill="#c9e3b8" opacity="0.8"/>
<path d="M1574.1 1026.1 L1581.9 1026.8 L1574.5 1034.9 L1564.9 1035.6 L1565.6 1027.8Z" fill="#9fcea6" opacity="0.8"/>
<path d="M352.3 812.1 L333.0 815.1 L336.7 801.9Z" fill="#c9e3b8" opacity="0.8"/>
<path d="M1531.9 605.6 L1544.7 613.5 L1526.2 620.4Z" fill="#9fcea6" opacity="0.8"/>
<path d="M987.3 40.2 L966.7 9.8 L1002.2 5.4Z" fill="#bfe0b4" opacity="0.8"/>
<path d="M977.0 484.2 L969.5 458.9 L998.8 462.3Z" fill="#d9eac8" opacity="0.8"/>
<path d="M203.4 764.6 L211.5 767.0 L207.3 774.1 L194.3 774.4 L193.0 768.2Z" fill="#c2e2b5" opacity="0.8"/>
<path d="M495.8 893.0 L486.1 888.4 L481.9 874.1 L505.5 868.9 L504.5 880.4Z" fill="#c9e3b8" opacity="0.8"/>
<path d="M1052.6 247.0 L1073.5 221.9 L1089.0 254.1Z" fill="#c4e2b6" opacity="0.8"/>
<path d="M706.7 425.1 L688.9 438.2 L680.9 433.8 L674.7 407.7 L685.7 410.2Z" fill="#dfe4de" opacity="0.8"/>
<path d="M679.4 562.7 L697.7 545.3 L703.8 565.2 L682.1 574.7Z" fill="#f1eed1" opacity="0.8"/>
<path d="M1281.8 302.4 L1273.8 277.5 L1297.9 276.6Z" fill="#a4d2a5" opacity="0.8"/>
<path d="M1112.7 1008.0 L1127.8 996.7 L1128.3 1016.6Z" fill="#dfe9c4" opacity="0.8"/>
<path d="M172.0 591.7 L144.7 588.2 L149.7 566.6 L174.2 568.2 L180.5 574.9Z" fill="#93c69f" opacity="0.8"/>
<path d="M1832.9 436.3 L1801.2 411.2 L1852.1 400.7Z" fill="#b2dbab" opacity="0.8"/>
<path d="M1402.3 125.8 L1373.2 127.7 L1369.8 101.1 L1391.1 94.4 L1415.0 114.1Z" fill="#a9d6a6" opacity="0.8"/>
<path d="M1507.1 752.0 L1482.7 772.7 L1462.4 744.4 L1492.8 722.1Z" fill="#9fcea6" opacity="0.8"/>
<path d="M714.0 493.7 L700.4 474.1 L731.3 457.6 L736.0 480.5Z" fill="#d6e7c0" opacity="0.8"/>
<path d="M579.0 139.8 L583.3 154.5 L580.2 165.3 L558.7 154.1 L565.9 150.5Z" fill="#bfe0b4" opacity="0.8"/>
<path d="M574.7 566.2 L584.1 554.3 L598.5 547.3 L607.1 566.5 L603.6 575.1Z" fill="#dfe4de" opacity="0.8"/>
<path d="M968.0 678.6 L933.3 707.9 L928.1 670.8Z" fill="#efe9c6" opacity="0.8"/>
<path d="M348.6 349.1 L319.8 345.2 L332.5 323.6 L344.4 324.3Z" fill="#f1eed1" opacity="0.8"/>
<path d="M931.0 187.5 L965.1 195.6 L953.5 217.4Z" fill="#c4e2b6" opacity="0.8"/>
<path d="M1292.8 -4.9 L1317.4 -12.6 L1329.4 10.4 L1288.2 26.5Z" fill="#b2dbab" opacity="0.8"/>
<path d="M791.4 131.3 L767.1 148.6 L750.9 124.6 L769.0 120.3 L793.8 123.3Z" fill="#e3e6c6" opacity="0.8"/>
<path d="M675.6 175.1 L675.6 182.3 L670.1 188.5 L656.1 177.3 L665.3 170.5Z" fill="#dfe4de" opacity="0.8"/>
<path d="M618.3 962.6 L610.9 952.3 L629.4 933.5 L639.9 945.7Z" fill="#d6e7c0" opacity="0.8"/>
<path d="M311.3 412.7 L307.2 392.1 L333.5 394.7 L327.7 410.4Z" fill="#f1eed1" opacity="0.8"/>
<path d="M891.2 366.3 L879.9 370.0 L877.8 350.6Z" fill="#bfe0b4" opacity="0.8"/>
<path d="M887.4 849.4 L872.1 833.4 L890.3 831.1Z" fill="#e3e6c6" opacity="0.8"/>
<path d="M1327.1 985.8 L1349.8 978.2 L1359.0 995.8 L1352.9 1010.8 L1326.8 1011.4Z" fill="#b0dba9" opacity="0.8"/>
<path d="M1260.9 601.1 L1230.1 606.4 L1237.2 586.1Z" fill="#b0dba9" opacity="0.8"/>
<path d="M953.3 323.7 L936.5 318.9 L939.9 300.3 L958.5 303.5 L955.9 310.9Z" fill="#d9eac8" opacity="0.8"/>
<path d="M1280.9 690.0 L1294.2 695.4 L1288.6 702.9 L1277.1 702.3Z" fill="#b0dba9" opacity="0.8"/>
<path d="M1274.9 411.7 L1293.9 434.2 L1264.5 426.6Z" fill="#a2d1a4" opacity="0.8"/>
<path d="M937.9 569.2 L927.7 541.0 L929.6 529.4 L952.7 546.3 L951.2 555.2Z" fill="#d6e7c0" opacity="0.8"/>
<path d="M404.3 950.8 L412.0 965.5 L381.7 974.2Z" fill="#c9e3b8" opacity="0.8"/>
<path d="M629.7 527.1 L641.0 509.8 L660.7 525.3 L667.1 537.5 L630.7 542.2Z" fill="#c9e3b8" opacity="0.8"/>
<path d="M318.2 817.6 L320.3 828.7 L304.6 833.1 L298.4 818.6 L311.3 816.7Z" fill="#9fcea6" opacity="0.8"/>
<path d="M263.0 688.4 L227.8 671.7 L261.3 663.7Z" fill="#b0dba9" opacity="0.8"/>
<path d="M1130.8 491.4 L1124.3 483.6 L1140.7 480.6Z" fill="#bfe0b4" opacity="0.8"/>
<path d="M220.0 345.6 L197.7 346.3 L197.1 341.5 L221.7 331.6 L224.9 335.3Z" fill="#93c69f" opacity="0.8"/>
<path d="M342.0 548.5 L375.0 564.2 L371.8 580.1 L346.4 594.1Z" fill="#f1eed1" opacity="0.8"/>
<path d="M602.0 184.4 L610.4 210.4 L571.1 198.7Z" fill="#c4e2b6" opacity="0.8"/>
<path d="M689.1 871.0 L707.9 871.7 L695.3 881.8Z" fill="#e3e6c6" opacity="0.8"/>
<path d="M292.1 310.3 L303.2 314.3 L305.9 316.1 L298.4 324.1 L288.1 320.6Z" fill="#efe9c6" opacity="0.8"/>
<path d="M1549.5 447.8 L1577.5 432.5 L1568.7 469.4Z" fill="#b0dba9" opacity="0.8"/>
<path d="M566.9 473.6 L544.4 476.8 L549.4 454.1 L572.0 455.2 L576.1 467.9Z" fill="#efe9c6" opacity="0.8"/>
<path d="M1297.2 636.3 L1289.5 650.1 L1269.5 645.9 L1258.3 641.1 L1278.1 632.0Z" fill="#b0dba9" opacity="0.8"/>
<path d="M692.4 608.8 L705.0 592.9 L713.2 615.6 L693.9 619.5Z" fill="#d6e7c0" opacity="0.8"/>
<path d="M1004.0 274.4 L986.0 259.0 L1010.5 253.1Z" fill="#bfe0b4" opacity="0.8"/>
<path d="M821.1 886.8 L843.9 908.7 L835.3 923.9 L821.3 931.3 L808.0 900.8Z" fill="#efe9c6" opacity="0.8"/>
<path d="M1477.3 62.3 L1460.2 73.2 L1458.0 47.0Z" fill="#a9d6a6" opacity="0.8"/>
<path d="M1661.2 583.9 L1657.3 598.0 L1634.6 595.3Z" fill="#b0dba9" opacity="0.8"/>
<path d="M669.6 512.0 L681.7 508.4 L681.4 515.2 L671.7 524.4Z" fill="#efe9c6" opacity="0.8"/>
<path d="M220.8 35.9 L196.1 17.2 L222.7 -0.8Z" fill="#8fc39b" opacity="0.8"/>
<path d="M1310.9 850.7 L1303.0 859.4 L1296.0 847.1Z" fill="#93c69f" opacity="0.8"/>
<path d="M1110.5 893.6 L1115.0 885.1 L1133.6 862.6 L1147.6 888.2 L1146.5 900.4Z" fill="#c4e2b6" opacity="0.8"/>
<path d="M1086.5 407.3 L1095.3 400.5 L1095.8 408.6 L1086.9 412.4Z" fill="#dfe9c4" opacity="0.8"/>
<path d="M936.6 270.7 L948.0 269.0 L952.0 275.3 L952.0 281.9 L935.4 280.4Z" fill="#c4e2b6" opacity="0.8"/>
<path d="M561.4 794.6 L581.6 797.6 L585.4 811.1 L558.8 806.9Z" fill="#c9e3b8" opacity="0.8"/>
<path d="M468.6 250.4 L455.0 254.8 L455.7 242.7Z" fill="#b2dbab" opacity="0.8"/>
<path d="M589.7 314.6 L576.3 332.3 L565.7 339.8 L558.5 316.6 L572.9 311.7Z" fill="#c9e3b8" opacity="0.8"/>
<path d="M112.7 498.9 L135.2 498.7 L156.9 507.2 L122.8 522.5Z" fill="#a9d6a6" opacity="0.8"/>
<path d="M204.7 268.9 L178.7 261.3 L182.0 239.9Z" fill="#8fc39b" opacity="0.8"/>
<path d="M1275.1 961.8 L1284.6 973.4 L1278.7 981.0 L1260.3 977.2Z" fill="#a9d6a6" opacity="0.8"/>
<path d="M960.3 629.1 L934.9 647.3 L906.8 620.6 L931.9 618.5Z" fill="#dfe4de" opacity="0.8"/>
<path d="M986.0 880.9 L1007.0 872.7 L1018.7 886.2 L1000.7 899.8Z" fill="#dfe4de" opacity="0.8"/>
<path d="M1462.4 343.0 L1458.8 329.3 L1458.6 312.7 L1478.6 320.3 L1473.2 333.8Z" fill="#a4d2a5" opacity="0.8"/>
<path d="M163.8 29.1 L176.1 25.9 L174.6 32.7Z" fill="#a9d6a6" opacity="0.8"/>
<path d="M1732.6 186.7 L1723.2 169.3 L1746.7 154.1 L1769.4 165.4Z" fill="#8fc39b" opacity="0.8"/>
<path d="M1405.1 76.4 L1371.5 92.1 L1368.8 70.7 L1372.9 58.5 L1396.3 57.1Z" fill="#93c69f" opacity="0.8"/>
<path d="M1420.2 675.7 L1441.3 671.6 L1445.9 684.3 L1432.8 684.6Z" fill="#b0dba9" opacity="0.8"/>
<path d="M1703.2 189.7 L1655.2 175.1 L1654.7 164.0 L1691.4 152.0 L1716.1 162.3Z" fill="#a4d2a5" opacity="0.8"/>
<path d="M1527.3 171.9 L1496.7 169.5 L1521.8 143.0Z" fill="#8fc39b" opacity="0.8"/>
<path d="M1428.6 923.5 L1434.4 928.3 L1428.8 934.5 L1419.0 941.2 L1411.4 923.8Z" fill="#b6ddae" opacity="0.8"/>
<path d="M912.4 135.3 L928.1 143.7 L916.1 150.7Z" fill="#bfe0b4" opacity="0.8"/>
<path d="M690.5 222.4 L701.7 225.8 L706.0 228.3 L690.5 230.6 L690.2 227.2Z" fill="#e3e6c6" opacity="0.8"/>
<path d="M520.4 359.7 L524.9 334.8 L536.8 333.1 L560.1 339.8 L549.3 360.9Z" fill="#93c69f" opacity="0.8"/>
<path d="M486.8 631.6 L529.9 633.0 L497.6 661.0Z" fill="#d6e7c0" opacity="0.8"/>
<path d="M838.6 697.6 L846.4 701.3 L842.7 707.5 L831.2 707.1 L830.3 700.7Z" fill="#d6e7c0" opacity="0.8"/>
<path d="M1137.9 713.2 L1171.5 695.4 L1164.4 730.8Z" fill="#dfe9c4" opacity="0.8"/>
<path d="M876.8 228.8 L916.6 224.8 L919.8 252.8Z" fill="#c4e2b6" opacity="0.8"/>
<path d="M1217.7 865.9 L1221.6 872.8 L1209.2 881.6 L1200.7 862.5Z" fill="#d9eac8" opacity="0.8"/>
<path d="M163.1 411.6 L169.1 412.7 L175.5 415.3 L165.7 425.1 L155.4 420.2Z" fill="#93c69f" opacity="0.8"/>
<path d="M1041.8 19.5 L1039.7 -6.2 L1069.0 -2.6Z" fill="#b0dba9" opacity="0.8"/>
<path d="M186.2 130.6 L192.7 141.4 L152.1 145.3 L151.5 131.9 L155.9 114.3Z" fill="#b2dbab" opacity="0.8"/>
<path d="M1168.7 1034.0 L1161.8 1031.7 L1164.7 1020.5 L1179.5 1028.2Z" fill="#a2d1a4" opacity="0.8"/>
<path d="M1051.3 982.0 L1062.4 972.4 L1081.7 986.8 L1064.0 995.8Z" fill="#c9e3b8" opacity="0.8"/>
<path d="M1291.8 591.4 L1279.8 586.0 L1285.6 574.9 L1293.7 577.8Z" fill="#c2e2b5" opacity="0.8"/>
<path d="M906.9 65.5 L906.1 54.8 L917.8 53.7 L922.5 58.4 L918.1 63.4Z" fill="#bfe0b4" opacity="0.8"/>
<path d="M557.9 422.3 L558.6 413.7 L561.9 412.2 L570.9 412.4 L571.4 419.7Z" fill="#c2e2b5" opacity="0.8"/>
<path d="M671.3 845.6 L699.4 827.0 L709.7 850.7 L687.5 868.6Z" fill="#e3e6c6" opacity="0.8"/>
<path d="M1361.2 837.3 L1356.4 849.7 L1337.1 851.2 L1334.8 840.5 L1342.9 835.6Z" fill="#a4d2a5" opacity="0.8"/>
<path d="M1107.4 833.7 L1129.0 847.4 L1104.4 849.8Z" fill="#d6e7c0" opacity="0.8"/>
<path d="M815.3 684.9 L837.6 687.9 L837.7 706.2 L826.3 714.8 L801.4 699.3Z" fill="#dfe4de" opacity="0.8"/>
<path d="M1699.0 321.9 L1740.3 339.0 L1715.3 363.4Z" fill="#a9d6a6" opacity="0.8"/>
<path d="M369.1 165.4 L370.0 149.4 L386.6 151.7 L385.9 162.3Z" fill="#a9d6a6" opacity="0.8"/>
<path d="M1489.0 927.0 L1484.5 943.3 L1455.6 937.2Z" fill="#b6ddae" opacity="0.8"/>
<path d="M475.4 966.2 L456.0 982.2 L442.8 985.7 L430.6 970.6 L447.3 955.3Z" fill="#f1eed1" opacity="0.8"/>
<path d="M136.6 575.7 L146.1 581.3 L145.0 600.1 L122.5 602.3 L117.1 583.8Z" fill="#8fc39b" opacity="0.8"/>
<path d="M307.8 173.8 L312.8 175.5 L313.9 181.3 L304.9 183.7Z" fill="#8fc39b" opacity="0.8"/>
<path d="M475.6 593.2 L467.2 611.8 L455.7 605.3 L457.1 598.2 L462.0 592.9Z" fill="#f1eed1" opacity="0.8"/>
<path d="M1334.9 229.0 L1305.0 225.4 L1332.1 199.7Z" fill="#a9d6a6" opacity="0.8"/>
<path d="M1092.4 251.7 L1092.0 241.2 L1098.9 245.5Z" fill="#d9eac8" opacity="0.8"/>
<path d="M1131.8 198.4 L1115.4 204.9 L1095.5 182.0 L1115.9 168.3Z" fill="#dfe9c4" opacity="0.8"/>
<path d="M1334.2 70.5 L1340.6 66.4 L1343.5 72.5 L1339.1 76.6Z" fill="#8fc39b" opacity="0.8"/>
<path d="M1812.1 619.1 L1829.2 604.3 L1856.2 599.7 L1846.5 622.5 L1831.7 633.1Z" fill="#93c69f" opacity="0.8"/>
<path d="M999.0 780.0 L1037.7 774.5 L1033.4 794.1 L1021.3 804.4 L1000.5 788.5Z" fill="#efe9c6" opacity="0.8"/>
<path d="M1788.1 52.2 L1789.8 61.3 L1756.9 61.5 L1746.6 45.6 L1772.8 43.8Z" fill="#bfe0b4" opacity="0.8"/>
<path d="M839.5 650.2 L823.1 633.1 L837.4 628.6Z" fill="#d6e7c0" opacity="0.8"/>
<path d="M823.7 688.2 L844.4 693.2 L836.0 702.7Z" fill="#e3e6c6" opacity="0.8"/>
<path d="M1564.2 923.5 L1553.6 943.1 L1528.4 936.8 L1533.7 921.8Z" fill="#c2e2b5" opacity="0.8"/>
<path d="M918.4 861.7 L900.6 861.9 L888.0 845.9 L903.4 845.1 L916.0 847.1Z" fill="#dfe4de" opacity="0.8"/>
<path d="M702.0 691.3 L717.8 686.0 L728.7 696.1 L727.4 708.3 L713.5 706.0Z" fill="#c9e3b8" opacity="0.8"/>
<path d="M1656.8 783.3 L1687.4 752.9 L1689.5 787.4Z" fill="#c2e2b5" opacity="0.8"/>
<path d="M339.6 636.4 L323.9 612.8 L343.8 600.8 L365.7 603.2 L362.7 635.1Z" fill="#dfe4de" opacity="0.8"/>
<path d="M317.2 617.3 L302.3 618.9 L294.6 606.4 L300.5 597.5 L322.6 598.1Z" fill="#f1eed1" opacity="0.8"/>
<path d="M390.6 316.5 L373.5 338.8 L361.0 314.2Z" fill="#d6e7c0" opacity="0.8"/>
<path d="M1749.7 644.8 L1766.3 662.1 L1744.7 673.1 L1736.0 650.5Z" fill="#a2d1a4" opacity="0.8"/>
<path d="M1727.3 563.3 L1730.7 551.4 L1739.6 552.2 L1743.0 564.9 L1731.8 562.2Z" fill="#b0dba9" opacity="0.8"/>
<path d="M1568.5 888.7 L1559.2 884.5 L1564.0 868.0 L1574.9 877.7Z" fill="#b6ddae" opacity="0.8"/>
<path d="M615.0 905.3 L640.7 899.3 L648.1 919.7Z" fill="#c9e3b8" opacity="0.8"/>
<path d="M1591.8 699.5 L1623.0 691.8 L1626.7 704.8 L1600.6 712.4Z" fill="#a2d1a4" opacity="0.8"/>
<path d="M1787.7 773.6 L1793.9 779.9 L1790.9 792.5 L1782.3 785.4Z" fill="#93c69f" opacity="0.8"/>
<path d="M167.0 714.2 L176.1 705.7 L184.3 714.1 L176.2 720.9Z" fill="#8fc39b" opacity="0.8"/>
<path d="M1126.1 40.7 L1116.5 36.6 L1120.8 25.2 L1136.6 29.6Z" fill="#a2d1a4" opacity="0.8"/>
<path d="M1069.2 57.4 L1055.8 27.4 L1082.6 20.3Z" fill="#9fcea6" opacity="0.8"/>
<path d="M801.1 709.2 L799.0 695.6 L826.3 680.8 L831.9 714.8Z" fill="#f1eed1" opacity="0.8"/>
<path d="M363.5 416.1 L357.2 432.9 L353.9 420.9Z" fill="#dfe4de" opacity="0.8"/>
<path d="M1569.6 666.3 L1586.0 668.0 L1589.2 690.0 L1572.2 682.0Z" fill="#a2d1a4" opacity="0.8"/>
<path d="M1433.1 353.8 L1462.8 343.9 L1474.8 362.8 L1472.6 376.8Z" fill="#a9d6a6" opacity="0.8"/>
<path d="M414.3 267.4 L388.4 279.1 L381.8 247.0Z" fill="#8fc39b" opacity="0.8"/>
<path d="M722.3 33.1 L697.8 8.6 L711.4 -7.1 L744.8 9.1Z" fill="#d9eac8" opacity="0.8"/>
<path d="M401.6 380.2 L366.7 376.2 L394.2 360.8Z" fill="#f1eed1" opacity="0.8"/>
<path d="M1366.2 47.6 L1385.8 59.2 L1364.2 63.8Z" fill="#93c69f" opacity="0.8"/>
<path d="M1187.7 63.2 L1199.9 63.4 L1195.8 73.9Z" fill="#a9d6a6" opacity="0.8"/>
<path d="M1788.5 1002.9 L1800.9 1015.3 L1777.9 1032.3 L1765.8 1006.6 L1780.3 999.3Z" fill="#b6ddae" opacity="0.8"/>
<path d="M205.2 830.2 L193.3 834.3 L199.5 821.2Z" fill="#c2e2b5" opacity="0.8"/>
<path d="M1236.0 646.7 L1259.4 628.4 L1272.8 649.3 L1237.4 662.8Z" fill="#c2e2b5" opacity="0.8"/>
<path d="M1244.0 97.1 L1208.4 96.3 L1203.8 86.6 L1225.8 75.8Z" fill="#a4d2a5" opacity="0.8"/>
<path d="M631.9 197.2 L644.4 202.1 L625.4 205.8Z" fill="#f1eed1" opacity="0.8"/>
<path d="M1417.5 775.2 L1450.3 802.6 L1418.6 796.6Z" fill="#b6ddae" opacity="0.8"/>
<path d="M895.0 744.7 L884.0 769.5 L858.3 737.9 L887.2 722.2Z" fill="#dfe4de" opacity="0.8"/>
<path d="M607.5 856.4 L609.9 840.0 L625.9 838.9 L626.0 849.8Z" fill="#f1eed1" opacity="0.8"/>
<path d="M626.9 64.7 L642.4 61.3 L646.6 73.3 L632.8 72.0Z" fill="#d9eac8" opacity="0.8"/>
<path d="M545.5 947.6 L554.7 948.1 L552.0 964.2 L537.4 960.8 L536.1 955.4Z" fill="#f1eed1" opacity="0.8"/>
<path d="M384.5 263.7 L403.1 265.6 L401.9 286.2Z" fill="#a4d2a5" opacity="0.8"/>
<path d="M239.6 506.4 L231.6 528.4 L203.4 531.0 L188.4 505.2 L217.2 501.6Z" fill="#efe9c6" opacity="0.8"/>
<path d="M398.2 395.2 L405.0 413.5 L373.8 405.8Z" fill="#e3e6c6" opacity="0.8"/>
<path d="M1113.5 702.9 L1099.3 698.7 L1108.2 691.2Z" fill="#c4e2b6" opacity="0.8"/>
<path d="M1622.8 151.1 L1601.2 142.6 L1604.7 119.1 L1623.5 136.4Z" fill="#b2dbab" opacity="0.8"/>
<path d="M1664.4 801.2 L1687.5 785.4 L1685.0 808.4Z" fill="#b0dba9" opacity="0.8"/>
<path d="M223.8 487.9 L215.1 490.7 L213.6 482.7 L223.9 478.3Z" fill="#c9e3b8" opacity="0.8"/>
<path d="M1083.2 58.7 L1113.4 66.9 L1118.1 88.3 L1102.1 87.5Z" fill="#9fcea6" opacity="0.8"/>
<path d="M407.5 87.7 L416.8 71.4 L445.9 75.8 L428.7 99.9Z" fill="#b2dbab" opacity="0.8"/>
<path d="M941.2 195.3 L958.7 173.2 L971.5 178.1 L972.9 202.6 L957.2 209.4Z" fill="#d9eac8" opacity="0.8"/>
<path d="M1489.8 918.9 L1459.2 907.0 L1459.6 900.1 L1475.6 889.4 L1499.3 893.0Z" fill="#b0dba9" opacity="0.8"/>
<path d="M899.2 550.5 L886.0 542.3 L902.3 525.8 L924.6 543.4Z" fill="#c9e3b8" opacity="0.8"/>
<path d="M332.4 416.3 L356.7 440.4 L319.1 439.1Z" fill="#c9e3b8" opacity="0.8"/>
<path d="M713.2 276.6 L726.8 266.9 L736.9 280.0Z" fill="#efe9c6" opacity="0.8"/>
<path d="M466.6 616.3 L446.0 595.1 L488.5 591.8Z" fill="#e3e6c6" opacity="0.8"/>
<path d="M540.6 1024.9 L541.2 1011.6 L552.0 1012.8 L552.9 1024.3Z" fill="#e3e6c6" opacity="0.8"/>
<path d="M988.7 607.3 L975.5 573.8 L1007.1 576.3Z" fill="#d6e7c0" opacity="0.8"/>
<path d="M1564.3 758.5 L1539.9 746.2 L1538.2 719.6 L1567.0 727.0 L1581.0 735.9Z" fill="#b6ddae" opacity="0.8"/>
<path d="M752.8 130.3 L777.8 143.1 L743.2 150.3Z" fill="#c9e3b8" opacity="0.8"/>
<path d="M948.0 934.6 L961.2 917.9 L979.5 932.3 L961.1 949.7Z" fill="#efe9c6" opacity="0.8"/>
<path d="M1490.9 399.7 L1503.0 425.0 L1486.2 434.8 L1462.5 422.8 L1467.3 397.4Z" fill="#8fc39b" opacity="0.8"/>
<path d="M1732.1 624.2 L1747.7 601.4 L1755.6 621.0Z" fill="#9fcea6" opacity="0.8"/>
<path d="M335.6 948.9 L325.7 950.5 L328.9 943.1Z" fill="#e3e6c6" opacity="0.8"/>
<path d="M1662.5 357.1 L1649.1 360.7 L1647.1 345.4 L1657.3 345.4Z" fill="#8fc39b" opacity="0.8"/>
<path d="M1117.6 64.2 L1102.1 59.3 L1107.8 47.8 L1128.5 49.7 L1131.1 62.4Z" fill="#9fcea6" opacity="0.8"/>
<path d="M1566.4 491.6 L1558.4 504.6 L1552.7 493.1Z" fill="#c2e2b5" opacity="0.8"/>
<path d="M968.1 235.4 L962.2 224.7 L958.8 221.9 L969.8 212.1 L981.8 223.5Z" fill="#bfe0b4" opacity="0.8"/>
<path d="M785.4 565.3 L777.1 542.7 L805.6 550.8Z" fill="#dfe4de" opacity="0.8"/>
<path d="M597.9 812.1 L616.6 806.9 L623.0 837.7 L611.9 850.1 L584.1 828.0Z" fill="#c9e3b8" opacity="0.8"/>
<path d="M1883.6 440.2 L1880.3 445.4 L1859.5 449.0 L1846.0 445.8 L1869.5 432.2Z" fill="#b2dbab" opacity="0.8"/>
<path d="M1157.3 327.4 L1144.1 305.1 L1172.3 301.6 L1183.3 321.7 L1176.7 325.8Z" fill="#b6ddae" opacity="0.8"/>
<path d="M1005.4 869.7 L1013.1 878.8 L998.2 877.0Z" fill="#e3e6c6" opacity="0.8"/>
<path d="M1401.2 950.6 L1392.5 942.5 L1398.2 927.6 L1411.1 939.1Z" fill="#93c69f" opacity="0.8"/>
<path d="M1034.0 828.6 L1033.0 850.4 L1008.3 859.1 L1005.3 836.1Z" fill="#f1eed1" opacity="0.8"/>
<path d="M595.9 934.6 L583.0 922.1 L608.9 916.8 L609.4 940.1Z" fill="#dfe4de" opacity="0.8"/>
<path d="M1734.6 862.9 L1728.5 837.1 L1754.8 839.8Z" fill="#a9d6a6" opacity="0.8"/>
<path d="M710.5 890.3 L670.0 907.4 L672.7 864.8Z" fill="#dfe4de" opacity="0.8"/>
<path d="M932.2 497.3 L936.7 463.4 L953.0 481.8Z" fill="#c9e3b8" opacity="0.8"/>
<path d="M949.5 48.1 L960.2 57.7 L947.3 70.7 L929.7 59.1 L932.8 44.4Z" fill="#bfe0b4" opacity="0.8"/>
<path d="M1092.3 875.4 L1106.3 861.9 L1131.0 880.1Z" fill="#efe9c6" opacity="0.8"/>
<path d="M1131.7 472.5 L1100.4 457.6 L1113.4 432.6 L1131.3 441.2Z" fill="#c4e2b6" opacity="0.8"/>
<path d="M124.6 427.8 L150.5 427.5 L169.9 449.2 L146.4 465.7Z" fill="#b2dbab" opacity="0.8"/>
<path d="M311.0 24.6 L309.7 5.5 L352.2 32.4Z" fill="#a4d2a5" opacity="0.8"/>
<path d="M1012.5 975.1 L1024.3 981.2 L1015.8 989.7Z" fill="#efe9c6" opacity="0.8"/>
<path d="M891.0 116.8 L864.2 115.2 L872.9 87.4 L917.7 92.9Z" fill="#d9eac8" opacity="0.8"/>
<path d="M212.6 478.4 L213.8 488.0 L203.5 498.7 L195.8 486.9 L200.7 481.4Z" fill="#a4d2a5" opacity="0.8"/>
<path d="M415.7 578.9 L400.6 575.8 L400.5 569.7 L408.1 564.6 L420.6 569.9Z" fill="#d6e7c0" opacity="0.8"/>
<path d="M903.8 475.8 L891.1 460.8 L905.3 451.7 L916.6 463.6Z" fill="#efe9c6" opacity="0.8"/>
<path d="M1391.5 349.9 L1396.2 360.2 L1388.0 362.7 L1378.3 351.9 L1382.6 347.7Z" fill="#93c69f" opacity="0.8"/>
<path d="M1264.5 766.5 L1263.1 778.8 L1246.3 784.9 L1243.3 777.3 L1236.9 765.7Z" fill="#9fcea6" opacity="0.8"/>
<path d="M938.9 363.1 L950.3 381.3 L930.3 396.8 L928.7 377.9Z" fill="#d9eac8" opacity="0.8"/>
<path d="M935.7 994.1 L929.0 988.6 L939.5 985.4Z" fill="#d6e7c0" opacity="0.8"/>
<path d="M1816.8 113.8 L1806.3 121.4 L1790.5 125.1 L1787.1 106.9 L1809.1 103.0Z" fill="#9fcea6" opacity="0.8"/>
<path d="M566.6 92.3 L567.2 84.9 L576.9 86.6Z" fill="#c4e2b6" opacity="0.8"/>
<path d="M399.0 143.6 L379.4 120.4 L391.0 119.0 L405.9 123.9Z" fill="#93c69f" opacity="0.8"/>
<path d="M1081.2 466.3 L1093.5 456.7 L1105.2 481.5 L1084.8 486.1 L1069.5 477.2Z" fill="#d9eac8" opacity="0.8"/>
<path d="M1407.4 1005.0 L1379.7 997.0 L1388.0 966.1 L1416.4 973.7Z" fill="#b0dba9" opacity="0.8"/>
<path d="M1861.2 200.7 L1905.0 219.7 L1867.6 248.1Z" fill="#a4d2a5" opacity="0.8"/>
<path d="M511.0 948.5 L552.1 974.9 L517.1 990.4 L506.2 965.9Z" fill="#f1eed1" opacity="0.8"/>
<path d="M176.5 293.4 L183.2 271.9 L198.4 272.6 L209.8 298.0 L192.6 306.7Z" fill="#8fc39b" opacity="0.8"/>
<path d="M1735.1 979.2 L1756.0 989.8 L1743.1 1013.3 L1725.9 992.0Z" fill="#a2d1a4" opacity="0.8"/>
<path d="M1622.5 793.0 L1617.4 771.1 L1643.8 757.2 L1639.0 784.7Z" fill="#9fcea6" opacity="0.8"/>
<path d="M893.3 751.6 L887.5 764.3 L876.5 764.4 L881.1 750.1Z" fill="#c9e3b8" opacity="0.8"/>
<path d="M937.3 848.6 L915.1 820.6 L941.8 807.3 L965.2 830.7Z" fill="#dfe4de" opacity="0.8"/>
<path d="M1718.4 838.5 L1730.7 839.4 L1736.0 851.0 L1730.1 863.9 L1708.1 846.5Z" fill="#8fc39b" opacity="0.8"/>
<path d="M1777.0 589.2 L1775.1 600.8 L1755.2 610.6 L1752.0 588.2 L1763.4 578.6Z" fill="#b6ddae" opacity="0.8"/>
<path d="M1428.5 344.8 L1474.1 316.2 L1480.7 353.6Z" fill="#93c69f" opacity="0.8"/>
<path d="M1817.8 708.9 L1799.5 701.7 L1807.3 694.1 L1818.4 693.6Z" fill="#a9d6a6" opacity="0.8"/>
<path d="M1436.2 253.4 L1418.9 257.2 L1416.4 246.7 L1415.1 237.8 L1435.0 245.4Z" fill="#8fc39b" opacity="0.8"/>
<path d="M1354.8 564.6 L1340.3 570.8 L1331.7 545.6Z" fill="#9fcea6" opacity="0.8"/>
<path d="M1333.8 386.8 L1358.1 412.9 L1328.7 420.3Z" fill="#8fc39b" opacity="0.8"/>
<path d="M41.7 66.7 L28.9 54.2 L53.1 42.8 L62.2 53.2 L66.6 69.6Z" fill="#93c69f" opacity="0.8"/>
<path d="M565.2 596.9 L576.4 590.7 L593.0 593.9 L594.5 605.6 L577.3 613.5Z" fill="#f1eed1" opacity="0.8"/>
<path d="M842.3 487.6 L808.3 513.8 L808.8 486.5Z" fill="#f1eed1" opacity="0.8"/>
<path d="M1458.6 786.1 L1472.4 791.6 L1469.4 798.6 L1457.7 796.7 L1451.6 791.0Z" fill="#b0dba9" opacity="0.8"/>
<path d="M951.8 1031.8 L952.6 1038.7 L945.2 1062.8 L927.9 1053.8 L927.0 1036.4Z" fill="#c9e3b8" opacity="0.8"/>
<path d="M842.9 244.1 L874.1 252.9 L852.4 265.1Z" fill="#d6e7c0" opacity="0.8"/>
<path d="M637.9 40.1 L627.4 54.5 L603.9 41.0 L618.3 26.0 L634.4 15.9Z" fill="#bfe0b4" opacity="0.8"/>
<path d="M836.3 71.2 L852.6 59.7 L847.4 71.8Z" fill="#bfe0b4" opacity="0.8"/>
<path d="M1508.3 114.8 L1520.6 116.9 L1512.3 124.3Z" fill="#b2dbab" opacity="0.8"/>
<path d="M882.3 -4.0 L888.7 17.8 L876.8 18.3 L859.8 4.3 L856.6 -4.3Z" fill="#d9eac8" opacity="0.8"/>
<path d="M1558.6 889.8 L1578.4 893.7 L1577.7 924.7 L1546.8 925.7Z" fill="#a2d1a4" opacity="0.8"/>
<path d="M409.4 295.5 L421.2 281.1 L433.9 303.7Z" fill="#a4d2a5" opacity="0.8"/>
<path d="M963.2 267.4 L965.7 254.9 L978.3 252.1 L988.2 261.0 L984.4 273.7Z" fill="#bfe0b4" opacity="0.8"/>
<path d="M393.1 256.1 L374.7 249.6 L379.7 233.7 L411.0 229.9 L404.8 255.5Z" fill="#c2e2b5" opacity="0.8"/>
<path d="M627.3 500.1 L633.8 478.7 L668.7 490.4 L655.2 510.1 L640.7 511.4Z" fill="#c9e3b8" opacity="0.8"/>
<path d="M379.1 143.2 L365.2 184.8 L336.0 170.8Z" fill="#b2dbab" opacity="0.8"/>
<path d="M753.3 641.1 L739.5 629.5 L753.5 619.9Z" fill="#dfe4de" opacity="0.8"/>
<path d="M401.1 619.3 L390.5 619.4 L376.2 606.8 L383.1 602.4 L403.1 602.9Z" fill="#efe9c6" opacity="0.8"/>
<path d="M879.9 236.3 L884.7 264.5 L848.1 257.2 L857.2 237.5Z" fill="#d6e7c0" opacity="0.8"/>
<path d="M979.8 571.9 L997.4 578.5 L983.7 588.7 L967.0 580.9Z" fill="#dfe4de" opacity="0.8"/>
<path d="M1516.7 793.9 L1498.9 794.5 L1505.2 775.1 L1526.4 781.0Z" fill="#b6ddae" opacity="0.8"/>
<path d="M1844.7 182.6 L1846.0 169.5 L1855.1 163.4 L1868.7 176.9 L1873.4 189.7Z" fill="#a2d1a4" opacity="0.8"/>
<path d="M207.8 697.6 L197.9 689.8 L212.9 681.6 L226.8 682.4 L223.3 700.0Z" fill="#a4d2a5" opacity="0.8"/>
<path d="M428.6 837.6 L423.8 809.7 L462.9 840.9Z" fill="#d6e7c0" opacity="0.8"/>
<path d="M880.8 193.4 L913.0 204.6 L886.0 222.8Z" fill="#c4e2b6" opacity="0.8"/>
<path d="M1057.5 151.9 L1029.7 155.2 L1023.6 133.4 L1034.3 127.6 L1060.1 139.8Z" fill="#bfe0b4" opacity="0.8"/>
<path d="M696.1 478.9 L661.3 471.0 L693.5 460.4Z" fill="#e3e6c6" opacity="0.8"/>
<path d="M359.8 866.2 L352.5 878.3 L348.3 868.6Z" fill="#efe9c6" opacity="0.8"/>
<path d="M679.1 30.0 L673.5 33.2 L663.0 25.2 L682.8 21.3Z" fill="#dfe9c4" opacity="0.8"/>
<path d="M886.5 825.5 L906.7 828.8 L881.1 859.4 L859.7 840.8 L861.4 823.0Z" fill="#dfe4de" opacity="0.8"/>
<path d="M869.7 205.2 L865.2 212.6 L852.9 213.3 L861.7 197.3Z" fill="#c4e2b6" opacity="0.8"/>
<path d="M922.6 669.9 L904.5 661.5 L908.8 652.0 L925.7 649.4 L933.2 658.2Z" fill="#c9e3b8" opacity="0.8"/>
<path d="M1358.1 365.3 L1372.9 367.4 L1370.4 376.2 L1356.6 375.3Z" fill="#8fc39b" opacity="0.8"/>
<path d="M1083.3 651.2 L1072.0 630.5 L1088.6 614.9 L1113.9 630.5 L1118.1 636.3Z" fill="#c4e2b6" opacity="0.8"/>
<path d="M292.3 242.9 L278.1 243.5 L268.7 229.3 L286.5 227.4Z" fill="#93c69f" opacity="0.8"/>
<path d="M1732.9 479.6 L1722.9 462.2 L1749.1 458.2Z" fill="#a2d1a4" opacity="0.8"/>
<path d="M901.9 81.4 L897.0 76.3 L905.0 61.0 L910.6 60.8 L915.1 73.9Z" fill="#c4e2b6" opacity="0.8"/>
<path d="M466.6 904.9 L466.4 940.8 L443.4 928.7Z" fill="#d6e7c0" opacity="0.8"/>
<path d="M593.0 425.3 L578.8 407.8 L587.1 394.7 L606.0 406.2 L604.6 412.9Z" fill="#c9e3b8" opacity="0.8"/>
<path d="M795.4 693.1 L821.1 694.2 L815.2 712.9Z" fill="#efe9c6" opacity="0.8"/>
<path d="M1590.5 486.5 L1599.3 489.6 L1604.3 501.7 L1580.0 501.0Z" fill="#9fcea6" opacity="0.8"/>
<path d="M123.1 57.7 L123.0 51.3 L133.1 42.3 L138.3 51.8Z" fill="#8fc39b" opacity="0.8"/>
<path d="M1411.2 656.1 L1392.0 655.5 L1391.3 648.1 L1406.2 638.9 L1420.4 643.5Z" fill="#a2d1a4" opacity="0.8"/>
<path d="M394.9 461.3 L411.3 450.3 L411.8 465.6 L400.6 476.1Z" fill="#efe9c6" opacity="0.8"/>
<path d="M1504.0 972.2 L1483.9 980.2 L1475.1 954.3 L1492.6 947.9 L1502.4 943.7Z" fill="#c2e2b5" opacity="0.8"/>
<path d="M131.2 310.8 L125.6 303.8 L137.3 296.5 L148.7 305.5Z" fill="#93c69f" opacity="0.8"/>
<path d="M1353.4 298.1 L1357.9 286.6 L1369.4 291.1 L1363.7 301.4Z" fill="#93c69f" opacity="0.8"/>
<path d="M200.1 553.1 L192.9 523.3 L243.6 526.4 L222.7 548.3Z" fill="#efe9c6" opacity="0.8"/>
<path d="M1216.9 208.5 L1225.9 216.6 L1218.6 225.8 L1212.3 218.4 L1212.4 209.9Z" fill="#a4d2a5" opacity="0.8"/>
<path d="M380.2 673.8 L374.8 682.5 L360.2 687.7 L356.1 671.7 L364.6 664.9Z" fill="#efe9c6" opacity="0.8"/>
<path d="M718.7 146.4 L738.8 123.6 L769.5 154.2 L734.9 164.8Z" fill="#efe9c6" opacity="0.8"/>
<path d="M886.6 320.2 L915.2 330.2 L892.9 340.5Z" fill="#dfe9c4" opacity="0.8"/>
<path d="M1355.2 241.7 L1343.8 235.1 L1349.0 222.6 L1362.5 235.4Z" fill="#b2dbab" opacity="0.8"/>
<path d="M453.0 258.9 L459.6 261.8 L457.8 272.6 L445.3 273.0 L443.3 269.5Z" fill="#8fc39b" opacity="0.8"/>
<path d="M1334.5 854.4 L1337.5 849.9 L1342.3 840.8 L1354.8 855.1 L1348.2 859.4Z" fill="#93c69f" opacity="0.8"/>
<path d="M562.1 725.3 L536.6 728.6 L528.5 716.3 L547.1 708.0 L561.0 710.4Z" fill="#f1eed1" opacity="0.8"/>
<path d="M203.7 640.0 L230.5 648.1 L202.7 666.7Z" fill="#8fc39b" opacity="0.8"/>
<path d="M916.6 51.1 L903.0 53.5 L914.9 41.6Z" fill="#c4e2b6" opacity="0.8"/>
<path d="M1537.5 619.3 L1551.2 608.3 L1570.0 618.1 L1555.5 626.0Z" fill="#9fcea6" opacity="0.8"/>
<path d="M198.3 60.5 L178.8 67.9 L162.3 62.7 L176.0 48.1Z" fill="#93c69f" opacity="0.8"/>
<path d="M711.6 509.9 L716.6 512.0 L714.6 528.1 L705.9 521.4 L701.0 513.3Z" fill="#d6e7c0" opacity="0.8"/>
<path d="M1726.7 884.7 L1729.9 859.8 L1757.1 856.6 L1754.3 885.2Z" fill="#9fcea6" opacity="0.8"/>
<path d="M1853.1 27.9 L1875.1 9.7 L1888.1 23.7 L1878.8 41.1 L1856.5 40.1Z" fill="#c2e2b5" opacity="0.8"/>
<path d="M454.7 968.3 L453.5 950.7 L469.3 950.3 L466.0 970.1Z" fill="#e3e6c6" opacity="0.8"/>
<path d="M477.8 543.2 L487.3 537.0 L504.0 540.3 L496.7 547.4Z" fill="#d6e7c0" opacity="0.8"/>
<path d="M1419.8 341.0 L1403.7 357.4 L1397.5 336.0Z" fill="#8fc39b" opacity="0.8"/>
<path d="M1595.7 131.6 L1587.5 137.9 L1569.8 124.2 L1587.5 114.4Z" fill="#a9d6a6" opacity="0.8"/>
<path d="M1574.8 952.6 L1585.0 959.3 L1587.4 975.8 L1562.0 988.0 L1554.7 976.5Z" fill="#b2dbab" opacity="0.8"/>
<path d="M235.6 807.9 L243.5 822.4 L231.3 826.7 L220.9 820.9Z" fill="#b6ddae" opacity="0.8"/>
<path d="M803.9 131.3 L802.8 136.0 L793.6 137.5 L790.5 131.6 L796.5 123.5Z" fill="#d6e7c0" opacity="0.8"/>
<path d="M127.1 443.3 L129.4 431.5 L136.9 432.6 L139.6 439.8 L137.8 447.3Z" fill="#b2dbab" opacity="0.8"/>
<path d="M925.5 406.5 L936.6 394.1 L957.7 428.9 L939.4 434.1 L912.1 422.1Z" fill="#c4e2b6" opacity="0.8"/>
<path d="M736.0 168.9 L731.3 159.3 L740.9 155.5 L748.1 162.3 L749.9 168.4Z" fill="#d6e7c0" opacity="0.8"/>
<path d="M1325.8 846.6 L1324.5 828.7 L1341.6 826.9 L1366.7 843.4 L1364.7 856.7Z" fill="#b2dbab" opacity="0.8"/>
<path d="M729.3 433.0 L721.9 442.7 L694.8 453.6 L677.2 430.5 L706.8 419.9Z" fill="#efe9c6" opacity="0.8"/>
<path d="M1007.6 449.9 L1026.0 440.3 L1033.9 444.8 L1029.0 461.6Z" fill="#dfe9c4" opacity="0.8"/>
<path d="M478.4 827.4 L471.6 829.5 L457.2 827.6 L467.7 811.1 L475.7 812.2Z" fill="#d6e7c0" opacity="0.8"/>
<path d="M216.2 89.3 L242.0 69.0 L249.8 88.3Z" fill="#b2dbab" opacity="0.8"/>
<path d="M1795.2 940.3 L1805.2 946.9 L1794.6 960.3 L1767.1 953.0 L1769.1 938.5Z" fill="#9fcea6" opacity="0.8"/>
<path d="M1204.3 406.0 L1179.4 385.9 L1208.8 378.6Z" fill="#c2e2b5" opacity="0.8"/>
<path d="M1418.8 642.1 L1396.4 617.4 L1418.9 610.1 L1437.3 616.9 L1431.1 626.9Z" fill="#c2e2b5" opacity="0.8"/>
<path d="M1264.9 790.5 L1283.0 804.1 L1250.5 817.3 L1247.6 814.0 L1254.8 793.6Z" fill="#93c69f" opacity="0.8"/>
<path d="M791.8 303.5 L781.5 311.6 L774.9 297.8 L781.3 290.9 L788.9 296.9Z" fill="#dfe4de" opacity="0.8"/>
<path d="M624.0 216.6 L617.1 233.7 L589.2 210.1 L601.9 192.2Z" fill="#bfe0b4" opacity="0.8"/>
<path d="M325.6 276.0 L325.0 260.0 L349.4 256.2 L354.5 268.7Z" fill="#efe9c6" opacity="0.8"/>
<path d="M496.7 250.1 L496.8 290.1 L469.7 260.9Z" fill="#8fc39b" opacity="0.8"/>
<path d="M1245.6 209.3 L1249.6 192.4 L1273.9 200.2 L1252.0 221.2Z" fill="#a9d6a6" opacity="0.8"/>
<path d="M969.3 154.1 L990.5 149.6 L981.6 169.0Z" fill="#bfe0b4" opacity="0.8"/>
<path d="M944.5 514.3 L929.2 524.6 L916.8 520.3 L916.8 513.3 L932.2 499.2Z" fill="#e3e6c6" opacity="0.8"/>
<path d="M142.1 100.7 L157.4 105.5 L138.9 121.1Z" fill="#a4d2a5" opacity="0.8"/>
<path d="M337.5 224.2 L320.0 222.8 L328.9 208.0 L333.2 200.1 L360.0 213.3Z" fill="#b0dba9" opacity="0.8"/>
<path d="M495.7 963.1 L476.7 972.1 L466.2 973.6 L471.9 955.2 L480.7 955.4Z" fill="#d6e7c0" opacity="0.8"/>
<path d="M1660.3 771.1 L1673.2 749.8 L1697.9 761.7 L1676.0 783.6Z" fill="#b6ddae" opacity="0.8"/>
<path d="M836.1 679.5 L873.1 671.0 L880.4 695.0Z" fill="#efe9c6" opacity="0.8"/>
<path d="M786.6 22.5 L811.9 21.9 L797.3 48.3 L770.0 43.8Z" fill="#bfe0b4" opacity="0.8"/>
<path d="M638.7 961.7 L611.4 957.7 L634.6 944.2Z" fill="#c9e3b8" opacity="0.8"/>
<path d="M1082.0 440.3 L1104.7 440.9 L1092.3 452.1Z" fill="#d9eac8" opacity="0.8"/>
<path d="M1145.3 465.8 L1144.1 458.2 L1154.3 459.9 L1159.8 471.4 L1145.6 473.4Z" fill="#dfe9c4" opacity="0.8"/>
<path d="M487.5 698.1 L482.9 709.9 L443.6 715.3 L452.7 695.0Z" fill="#d6e7c0" opacity="0.8"/>
<path d="M1403.5 839.0 L1386.4 821.2 L1421.1 822.6Z" fill="#a9d6a6" opacity="0.8"/>
<path d="M1320.4 -5.7 L1327.3 10.9 L1305.3 11.2Z" fill="#93c69f" opacity="0.8"/>
<path d="M1579.3 744.1 L1612.8 757.1 L1592.2 780.8 L1565.7 770.6Z" fill="#a2d1a4" opacity="0.8"/>
<path d="M620.5 209.2 L619.9 224.3 L601.4 225.1 L591.7 219.6 L609.9 205.3Z" fill="#dfe4de" opacity="0.8"/>
<path d="M248.4 213.3 L264.7 231.8 L235.4 225.7Z" fill="#b2dbab" opacity="0.8"/>
<path d="M491.3 1038.9 L492.7 1016.3 L514.9 1021.4 L508.4 1038.8Z" fill="#efe9c6" opacity="0.8"/>
<path d="M634.1 713.9 L640.4 715.5 L635.0 724.0 L630.2 719.6Z" fill="#efe9c6" opacity="0.8"/>
<path d="M511.0 354.8 L521.3 347.8 L542.5 366.3 L540.0 385.5 L521.1 380.3Z" fill="#8fc39b" opacity="0.8"/>
<path d="M593.8 1050.1 L593.9 1040.5 L629.7 1031.1 L622.7 1056.9Z" fill="#f1eed1" opacity="0.8"/>
<path d="M509.6 105.0 L515.1 79.4 L534.7 87.4Z" fill="#d9eac8" opacity="0.8"/>
<path d="M965.5 197.7 L953.2 192.4 L962.2 181.0 L966.7 178.0 L973.7 187.5Z" fill="#d9eac8" opacity="0.8"/>
<path d="M1144.4 818.6 L1149.0 833.0 L1133.6 829.7 L1130.7 817.0Z" fill="#c4e2b6" opacity="0.8"/>
<path d="M299.1 419.9 L316.7 417.6 L330.6 426.3 L299.0 436.3Z" fill="#e3e6c6" opacity="0.8"/>
<path d="M998.5 825.2 L1022.8 829.3 L1015.6 839.6Z" fill="#efe9c6" opacity="0.8"/>
<path d="M837.4 993.1 L848.1 996.3 L835.6 1003.8 L833.7 997.1Z" fill="#dfe4de" opacity="0.8"/>
<path d="M1332.2 93.3 L1353.0 111.6 L1334.2 114.5Z" fill="#b2dbab" opacity="0.8"/>
<path d="M346.8 1011.0 L381.9 999.7 L389.0 1033.3Z" fill="#f1eed1" opacity="0.8"/>
<path d="M265.3 715.0 L252.3 709.3 L255.1 702.6 L264.2 700.3 L269.7 712.4Z" fill="#a2d1a4" opacity="0.8"/>
<path d="M1819.9 865.3 L1823.5 838.6 L1852.5 855.4Z" fill="#b6ddae" opacity="0.8"/>
<path d="M1089.8 857.9 L1062.5 874.0 L1043.5 852.8 L1071.6 822.3Z" fill="#efe9c6" opacity="0.8"/>
<path d="M1889.8 687.4 L1862.2 687.9 L1878.5 669.5Z" fill="#8fc39b" opacity="0.8"/>
<path d="M1831.0 605.6 L1844.1 600.5 L1866.1 600.5 L1867.0 620.8 L1842.5 623.7Z" fill="#a4d2a5" opacity="0.8"/>
<path d="M454.3 263.9 L443.9 239.1 L466.8 247.3Z" fill="#b2dbab" opacity="0.8"/>
<path d="M1090.2 657.4 L1090.5 674.3 L1073.5 673.5 L1066.7 661.5Z" fill="#c4e2b6" opacity="0.8"/>
<path d="M1709.5 235.9 L1738.1 233.1 L1751.3 248.7 L1725.7 256.2 L1705.6 250.7Z" fill="#b2dbab" opacity="0.8"/>
<path d="M1503.1 6.2 L1507.8 18.2 L1487.8 37.9 L1481.8 20.5Z" fill="#8fc39b" opacity="0.8"/>
<path d="M1776.7 265.1 L1794.0 270.0 L1796.3 279.0 L1798.1 291.4 L1781.9 286.4Z" fill="#a4d2a5" opacity="0.8"/>
<path d="M453.5 738.9 L451.0 750.1 L439.5 754.5 L445.4 738.8Z" fill="#c9e3b8" opacity="0.8"/>
<path d="M1814.7 987.9 L1820.4 963.7 L1849.1 959.0 L1842.7 985.5Z" fill="#a2d1a4" opacity="0.8"/>
<path d="M1086.1 886.8 L1083.6 917.0 L1056.3 909.6Z" fill="#f1eed1" opacity="0.8"/>
<path d="M1090.4 125.2 L1101.9 149.0 L1083.3 145.9 L1066.8 137.5 L1073.3 109.6Z" fill="#bfe0b4" opacity="0.8"/>
<path d="M438.8 468.6 L422.1 471.3 L407.1 464.3 L421.4 447.9Z" fill="#f1eed1" opacity="0.8"/>
<path d="M1065.0 515.2 L1071.2 521.5 L1059.1 528.8 L1052.5 531.1 L1047.3 512.8Z" fill="#d9eac8" opacity="0.8"/>
<path d="M180.7 645.0 L164.7 630.5 L191.8 629.8Z" fill="#a4d2a5" opacity="0.8"/>
<path d="M871.4 681.1 L875.3 691.0 L852.9 687.2Z" fill="#e3e6c6" opacity="0.8"/>
<path d="M949.0 427.3 L941.0 439.4 L914.6 433.6 L919.4 416.1 L938.6 415.9Z" fill="#d9eac8" opacity="0.8"/>
<path d="M1662.7 521.2 L1674.2 519.5 L1679.0 527.9 L1672.9 541.4 L1650.2 529.3Z" fill="#b6ddae" opacity="0.8"/>
<path d="M1316.8 134.5 L1352.9 144.2 L1316.0 158.1Z" fill="#8fc39b" opacity="0.8"/>
<path d="M674.0 70.5 L652.5 93.5 L633.4 64.1 L655.0 61.2Z" fill="#f1eed1" opacity="0.8"/>
<path d="M1592.0 886.3 L1579.5 867.0 L1609.7 865.0Z" fill="#a2d1a4" opacity="0.8"/>
<path d="M326.1 568.4 L312.0 575.2 L298.3 552.8 L304.6 545.2 L336.3 552.6Z" fill="#c9e3b8" opacity="0.8"/>
<path d="M974.6 807.0 L976.4 802.2 L990.8 804.9 L981.9 816.1Z" fill="#dfe4de" opacity="0.8"/>
<path d="M209.8 577.8 L191.0 580.6 L209.1 552.3Z" fill="#93c69f" opacity="0.8"/>
<path d="M782.1 271.2 L781.9 233.0 L819.9 251.8Z" fill="#dfe4de" opacity="0.8"/>
<path d="M418.5 307.5 L422.5 296.4 L442.3 319.6 L440.1 325.9 L419.0 323.3Z" fill="#a4d2a5" opacity="0.8"/>
<path d="M941.9 13.1 L923.6 11.6 L929.5 -3.3 L941.4 3.4Z" fill="#dfe9c4" opacity="0.8"/>
<path d="M1475.9 514.6 L1478.1 529.4 L1469.8 528.6 L1461.4 518.6 L1463.1 509.7Z" fill="#8fc39b" opacity="0.8"/>
<path d="M1198.0 657.1 L1186.7 657.6 L1181.8 654.4 L1182.4 650.2 L1195.4 646.6Z" fill="#bfe0b4" opacity="0.8"/>
<path d="M748.3 976.0 L773.1 971.4 L767.8 992.7 L744.1 996.3Z" fill="#dfe4de" opacity="0.8"/>
<path d="M999.8 905.9 L982.8 908.6 L989.3 882.9 L999.4 890.3Z" fill="#e3e6c6" opacity="0.8"/>
<path d="M980.2 24.2 L1002.3 12.4 L1016.3 28.5 L999.0 41.2 L987.4 37.7Z" fill="#b6ddae" opacity="0.8"/>
<path d="M1357.7 688.3 L1331.8 682.0 L1343.2 653.8 L1374.0 668.4Z" fill="#b6ddae" opacity="0.8"/>
<path d="M1361.8 1030.1 L1376.7 1035.3 L1381.7 1041.7 L1368.4 1050.4 L1360.1 1047.6Z" fill="#c2e2b5" opacity="0.8"/>
<path d="M313.4 466.8 L319.5 453.9 L335.0 474.2 L323.9 479.0Z" fill="#dfe4de" opacity="0.8"/>
<path d="M935.7 844.9 L918.7 836.6 L938.9 831.6Z" fill="#f1eed1" opacity="0.8"/>
<path d="M1262.8 606.2 L1303.6 623.5 L1284.2 640.3 L1260.2 629.1Z" fill="#9fcea6" opacity="0.8"/>
<path d="M385.1 557.4 L368.1 537.4 L400.3 533.0Z" fill="#e3e6c6" opacity="0.8"/>
<path d="M1317.2 277.1 L1285.5 286.5 L1303.5 246.5Z" fill="#8fc39b" opacity="0.8"/>
<path d="M257.6 860.9 L255.7 883.4 L227.6 875.4Z" fill="#c9e3b8" opacity="0.8"/>
<path d="M971.8 648.6 L961.3 652.1 L943.7 636.6 L966.7 627.8Z" fill="#f1eed1" opacity="0.8"/>
<path d="M1388.6 566.9 L1371.8 577.5 L1341.2 572.2 L1352.9 541.3Z" fill="#b0dba9" opacity="0.8"/>
<path d="M945.6 1021.2 L956.2 1012.5 L958.3 1023.0Z" fill="#d6e7c0" opacity="0.8"/>
<path d="M183.0 785.3 L184.0 795.1 L163.8 788.2Z" fill="#c2e2b5" opacity="0.8"/>
<path d="M1367.1 44.7 L1336.7 46.4 L1357.9 26.9Z" fill="#a4d2a5" opacity="0.8"/>
<path d="M258.6 838.4 L227.9 837.1 L253.2 826.6Z" fill="#d6e7c0" opacity="0.8"/>
<path d="M1855.2 297.4 L1814.5 281.9 L1830.6 256.3Z" fill="#b2dbab" opacity="0.8"/>
<path d="M1450.8 541.4 L1470.6 540.7 L1452.6 552.0Z" fill="#8fc39b" opacity="0.8"/>
<path d="M1141.1 266.9 L1147.7 231.4 L1166.2 232.9 L1174.9 261.1Z" fill="#a2d1a4" opacity="0.8"/>
<path d="M1137.2 865.7 L1126.5 869.0 L1125.7 861.9 L1129.8 859.4 L1139.9 858.4Z" fill="#bfe0b4" opacity="0.8"/>
<path d="M589.8 611.9 L587.5 622.5 L578.8 616.7Z" fill="#efe9c6" opacity="0.8"/>
<path d="M878.2 813.9 L875.7 840.3 L855.1 823.2Z" fill="#f1eed1" opacity="0.8"/>
<path d="M657.6 38.1 L650.0 33.7 L668.3 24.4 L677.9 34.5Z" fill="#d9eac8" opacity="0.8"/>
<path d="M716.4 109.9 L713.1 106.3 L722.0 103.2 L725.9 108.1 L721.0 116.9Z" fill="#efe9c6" opacity="0.8"/>
<path d="M1805.0 425.5 L1845.4 441.5 L1791.9 450.0Z" fill="#a9d6a6" opacity="0.8"/>
<path d="M1093.1 166.2 L1104.8 191.2 L1077.1 213.6Z" fill="#dfe9c4" opacity="0.8"/>
<path d="M715.6 396.4 L695.9 380.5 L701.8 364.2 L734.1 374.9Z" fill="#f1eed1" opacity="0.8"/>
<path d="M788.1 752.3 L797.3 740.9 L804.0 759.4Z" fill="#e3e6c6" opacity="0.8"/>
<path d="M191.5 502.0 L164.5 534.4 L138.7 505.9Z" fill="#b2dbab" opacity="0.8"/>
<path d="M564.2 119.3 L556.5 126.6 L547.4 122.5 L549.0 113.8Z" fill="#bfe0b4" opacity="0.8"/>
<path d="M806.2 101.7 L856.0 105.0 L843.6 120.6 L831.9 141.5 L802.7 120.5Z" fill="#c4e2b6" opacity="0.8"/>
<path d="M828.1 538.0 L813.2 541.3 L824.1 533.4Z" fill="#d6e7c0" opacity="0.8"/>
<path d="M1189.5 744.8 L1168.1 737.9 L1175.3 724.2 L1203.3 738.4Z" fill="#dfe9c4" opacity="0.8"/>
<path d="M1416.2 614.5 L1450.3 632.5 L1418.7 641.0Z" fill="#9fcea6" opacity="0.8"/>
<path d="M386.4 822.6 L407.6 813.0 L410.5 832.2 L404.8 840.5 L387.1 842.3Z" fill="#efe9c6" opacity="0.8"/>
<path d="M1738.2 140.3 L1750.4 133.3 L1759.0 139.8 L1764.9 146.6 L1755.0 151.0Z" fill="#b0dba9" opacity="0.8"/>
<path d="M1073.1 178.7 L1098.5 158.7 L1116.4 184.2 L1090.5 197.4Z" fill="#bfe0b4" opacity="0.8"/>
<path d="M965.6 834.5 L960.8 848.5 L951.2 839.5Z" fill="#d6e7c0" opacity="0.8"/>
<path d="M1407.6 459.8 L1425.9 450.1 L1440.2 460.1 L1424.7 465.1Z" fill="#93c69f" opacity="0.8"/>
<path d="M673.8 978.3 L691.3 966.2 L697.1 976.8 L685.6 984.2Z" fill="#dfe4de" opacity="0.8"/>
<path d="M1826.7 457.3 L1838.9 434.1 L1859.1 451.3Z" fill="#b2dbab" opacity="0.8"/>
<path d="M942.4 739.5 L907.8 755.6 L896.7 739.0 L920.4 720.8 L935.1 734.4Z" fill="#c9e3b8" opacity="0.8"/>
<path d="M744.9 67.3 L750.6 52.9 L774.6 67.3 L745.7 79.0Z" fill="#dfe9c4" opacity="0.8"/>
<path d="M1689.2 11.5 L1675.6 44.1 L1642.3 28.1Z" fill="#c4e2b6" opacity="0.8"/>
<path d="M1658.9 298.3 L1666.1 311.7 L1662.2 318.2 L1641.6 314.8 L1648.2 305.8Z" fill="#a4d2a5" opacity="0.8"/>
<path d="M41.3 88.0 L63.0 79.9 L74.4 89.8 L61.1 100.0Z" fill="#a4d2a5" opacity="0.8"/>
<path d="M1257.8 814.7 L1225.2 804.4 L1245.8 794.2Z" fill="#a2d1a4" opacity="0.8"/>
<path d="M1245.2 658.6 L1215.6 652.3 L1214.8 641.9 L1232.7 637.0 L1251.4 647.2Z" fill="#a2d1a4" opacity="0.8"/>
<path d="M901.7 75.0 L924.4 82.0 L918.4 92.0 L900.0 99.2 L900.0 84.1Z" fill="#bfe0b4" opacity="0.8"/>
<path d="M1345.0 909.6 L1334.1 878.6 L1363.5 872.8 L1373.9 891.6Z" fill="#a4d2a5" opacity="0.8"/>
<path d="M0 150 L25 170 L54 198 L85 221 L109 241 L103 254 L111 276 L120 308 L131 337 L136 363 L127 366 L131 399 L127 435 L125 471 L121 508 L116 528 L125 564 L127 601 L123 637 L120 673 L138 709 L152 746 L174 782 L192 818 L218 854 L236 891 L250 909 L276 927 L319 963 L348 1000 L381 1036 L392 1053 L0 1053Z" fill="#8fcbf6" />
<path d="M0 97 L22 103 L62 123 L85 132 L91 149 L109 165 L131 181 L152 201 L165 214 L170 232 L181 250 L194 265 L190 294 L184 272 L174 254 L160 254 L109 254 L103 241 L160 239 L161 225 L145 212 L120 196 L92 174 L78 145 L60 129 L36 121 L0 109Z" fill="#8fcbf6" />
<path d="M1348 343 L1363 337 L1384 337 L1395 348 L1421 337 L1450 326 L1468 316 L1493 301 L1486 319 L1473 335 L1493 326 L1508 337 L1529 345 L1544 354 L1580 339 L1602 343 L1609 354 L1627 352 L1620 337 L1616 312 L1609 301 L1602 276 L1573 272 L1562 254 L1547 228 L1500 225 L1482 218 L1468 232 L1442 250 L1435 268 L1395 294 L1370 308 L1348 326Z" fill="#8fcbf6" />
<path d="M1505 528 L1502 490 L1506 453 L1514 417 L1535 392 L1566 384 L1587 377 L1609 381 L1600 397 L1584 419 L1571 437 L1557 459 L1550 486 L1551 528 L1557 543 L1553 566 L1539 588 L1520 600 L1508 585 L1500 553Z" fill="#8fcbf6" />
<path d="M1609 381 L1642 366 L1674 370 L1711 374 L1729 377 L1747 395 L1772 410 L1787 428 L1794 446 L1783 464 L1758 435 L1740 421 L1725 424 L1732 446 L1725 468 L1714 508 L1711 528 L1707 550 L1700 564 L1693 550 L1696 528 L1682 490 L1671 453 L1664 421 L1649 399 L1627 392Z" fill="#8fcbf6" />
<path d="M1664 604 L1674 590 L1696 575 L1718 572 L1747 557 L1783 550 L1827 546 L1830 550 L1794 568 L1758 582 L1725 601 L1696 615 L1674 615Z" fill="#8fcbf6" />
<path d="M1800 512 L1815 500 L2000 497 L2000 520 L1830 522Z" fill="#8fcbf6" />
<path d="M1729 0 L1845 0 L1847 18 L1834 36 L1838 65 L1830 73 L1816 54 L1801 80 L1783 69 L1765 44 L1740 22Z" fill="#8fcbf6" />
<path d="M1091 0 L1142 0 L1149 29 L1164 58 L1174 83 L1171 109 L1160 131 L1153 109 L1156 73 L1142 36 L1120 29 L1109 15Z" fill="#8fcbf6" />
<path d="M1033 0 L1048 0 L1044 22 L1051 47 L1073 58 L1084 83 L1084 98 L1106 116 L1113 138 L1098 141 L1087 120 L1080 102 L1066 73 L1040 65 L1033 36Z" fill="#8fcbf6" />
<path d="M1218 192 L1240 170 L1254 174 L1258 196 L1247 210 L1233 203 L1229 218 L1218 218Z" fill="#8fcbf6" />
<path d="M1453 145 L1468 138 L1482 145 L1484 189 L1471 189 L1457 178 L1450 167Z" fill="#8fcbf6" />
<path d="M548 608 L559 606 L569 626 L577 651 L566 653 L551 626Z" fill="#8fcbf6" />
<path d="M1943 830 L1948 862 L1950 872 L1943 891 L1928 909 L1918 927 L1900 945 L1875 963 L1856 981 L1838 1000 L1816 1018 L1791 1036 L1762 1053 L2565 1053 L2565 830Z" fill="#8fcbf6" />
<path d="M1309.4 242.9 L1302.9 246.0 L1296.8 217.2 L1308.1 214.0Z" fill="#8fcbf6" />
<path d="M1203.2 302.9 L1198.3 314.0 L1193.4 302.6Z" fill="#8fcbf6" />
<path d="M1797.9 199.0 L1797.0 203.9 L1789.8 208.1 L1790.7 202.3Z" fill="#8fcbf6" />
<path d="M1296.0 237.5 L1307.2 239.8 L1301.1 246.3Z" fill="#8fcbf6" />
<path d="M1856.9 304.1 L1850.4 297.8 L1853.6 287.7 L1862.3 286.7 L1865.8 298.9Z" fill="#8fcbf6" />
<path d="M1529.4 107.6 L1531.9 100.0 L1541.4 100.0 L1539.9 110.1Z" fill="#8fcbf6" />
<path d="M1702.1 80.8 L1699.3 70.9 L1704.1 65.8 L1713.6 70.1 L1709.5 80.2Z" fill="#8fcbf6" />
<path d="M1364.6 64.4 L1348.5 58.1 L1367.9 43.0Z" fill="#8fcbf6" />
<path d="M1468.4 341.1 L1461.2 324.4 L1464.5 315.1 L1477.8 315.6 L1479.9 331.8Z" fill="#8fcbf6" />
<path d="M1226.3 103.4 L1216.1 89.0 L1233.4 86.9 L1243.3 100.0 L1235.8 105.9Z" fill="#8fcbf6" />
<path d="M1504.4 88.0 L1505.6 80.0 L1520.8 73.4 L1537.4 80.3 L1522.4 92.8Z" fill="#8fcbf6" />
<path d="M1522.5 52.0 L1513.7 50.7 L1520.8 38.8Z" fill="#8fcbf6" />
<path d="M1645.7 279.8 L1627.0 291.5 L1624.5 280.1 L1641.9 270.6Z" fill="#8fcbf6" />
<path d="M1635.7 256.9 L1632.6 263.6 L1629.5 258.1Z" fill="#8fcbf6" />
<path d="M1310.1 62.1 L1301.5 72.7 L1298.4 69.8 L1304.6 50.1 L1309.5 49.4Z" fill="#8fcbf6" />
<path d="M1780.4 127.5 L1787.3 116.4 L1794.8 118.3 L1787.8 143.9 L1778.0 143.9Z" fill="#8fcbf6" />
<path d="M1749.3 273.6 L1749.3 257.0 L1753.4 252.5 L1760.5 263.1 L1757.6 275.4Z" fill="#8fcbf6" />
<path d="M1581.1 12.7 L1585.7 27.3 L1564.1 23.1Z" fill="#8fcbf6" />
<path d="M1746.4 261.7 L1743.4 253.9 L1754.9 240.4 L1759.3 240.4 L1759.4 250.2Z" fill="#8fcbf6" />
<path d="M1651.5 15.4 L1647.8 24.4 L1642.0 16.8 L1643.1 4.5 L1650.1 8.5Z" fill="#8fcbf6" />
<path d="M1252.3 151.4 L1255.3 161.0 L1248.9 166.9 L1243.0 161.0 L1245.5 150.6Z" fill="#8fcbf6" />
<path d="M1378.2 163.8 L1366.9 165.5 L1357.9 156.8 L1378.3 152.4Z" fill="#8fcbf6" />
<path d="M1457.1 35.2 L1467.6 57.6 L1453.6 50.5Z" fill="#8fcbf6" />
<path d="M1306.7 134.2 L1316.5 147.1 L1309.8 155.5 L1292.4 134.2Z" fill="#8fcbf6" />
<path d="M1293.9 219.3 L1303.2 225.2 L1302.0 230.6 L1290.9 226.8 L1287.7 220.1Z" fill="#8fcbf6" />
<path d="M1642.7 205.4 L1652.9 201.2 L1653.9 208.1Z" fill="#8fcbf6" />
<path d="M1232.8 211.2 L1209.9 205.6 L1208.6 189.5Z" fill="#8fcbf6" />
<path d="M1186.2 50.1 L1197.3 50.1 L1198.5 58.8 L1185.9 58.4Z" fill="#8fcbf6" />
<path d="M1780.0 300.5 L1771.0 315.4 L1763.4 301.2Z" fill="#8fcbf6" />
<path d="M1304.9 161.7 L1296.4 171.1 L1285.4 171.0 L1288.0 161.4 L1302.1 155.7Z" fill="#8fcbf6" />
<path d="M1226.6 169.7 L1234.5 160.0 L1244.9 176.9Z" fill="#8fcbf6" />
<path d="M1471.1 6.0 L1468.2 14.9 L1461.7 17.3 L1464.4 5.4Z" fill="#8fcbf6" />
<path d="M1329.4 9.2 L1343.1 8.9 L1347.0 16.6 L1338.8 18.9 L1329.6 16.8Z" fill="#8fcbf6" />
<path d="M1370.0 24.1 L1370.0 17.9 L1389.9 10.0 L1396.6 17.2 L1386.0 25.5Z" fill="#8fcbf6" />
<path d="M1190.1 124.9 L1194.5 109.3 L1202.7 106.4 L1207.4 113.2 L1200.7 123.2Z" fill="#8fcbf6" />
<path d="M1546.8 101.8 L1538.7 96.0 L1546.0 86.1 L1551.5 92.1Z" fill="#8fcbf6" />
<path d="M1864.5 317.5 L1875.9 288.2 L1890.9 295.6Z" fill="#8fcbf6" />
<path d="M1879.3 91.6 L1880.0 96.7 L1875.0 102.2 L1867.5 102.9 L1869.7 96.1Z" fill="#8fcbf6" />
<path d="M1524.6 95.0 L1518.5 77.0 L1528.7 77.6 L1537.3 97.7Z" fill="#8fcbf6" />
<path d="M1298.0 50.6 L1295.0 48.1 L1299.5 43.5 L1303.2 44.1 L1302.2 48.9Z" fill="#8fcbf6" />
<path d="M1649.6 -6.7 L1664.7 15.0 L1648.0 17.5Z" fill="#8fcbf6" />
<path d="M1791.1 243.6 L1796.1 251.5 L1787.0 253.8 L1778.5 243.3Z" fill="#8fcbf6" />
<path d="M1699.9 86.5 L1702.7 78.0 L1709.6 78.9 L1705.4 87.7Z" fill="#8fcbf6" />
<path d="M1204.2 303.0 L1205.1 288.0 L1216.7 288.9 L1223.9 297.7 L1210.6 306.6Z" fill="#8fcbf6" />
<path d="M1650.0 4.4 L1645.4 18.9 L1638.0 20.5 L1636.8 -2.9 L1641.4 -7.1Z" fill="#8fcbf6" />
<path d="M1642.7 241.7 L1633.7 243.8 L1632.0 232.3 L1642.1 231.9Z" fill="#8fcbf6" />
<path d="M1246.7 164.5 L1245.7 157.1 L1253.4 159.4 L1252.6 166.8Z" fill="#8fcbf6" />
<path d="M1769.7 68.6 L1780.5 72.3 L1781.6 75.9 L1776.3 77.3 L1767.5 70.6Z" fill="#8fcbf6" />
<path d="M1344.8 178.7 L1346.1 188.7 L1339.4 197.7 L1337.3 183.6Z" fill="#8fcbf6" />
<path d="M1374.4 236.9 L1376.8 242.5 L1362.1 239.4 L1361.7 231.9Z" fill="#8fcbf6" />
<path d="M1347.6 354.2 L1350.6 352.0 L1357.1 357.2 L1353.7 362.4Z" fill="#8fcbf6" />
<path d="M1298.1 430.7 L1293.1 428.7 L1292.0 424.8 L1297.5 423.4 L1301.8 428.7Z" fill="#8fcbf6" />
<path d="M1273.9 398.2 L1290.2 385.4 L1287.2 398.2 L1274.7 406.5Z" fill="#8fcbf6" />
<path d="M1358.6 236.9 L1368.2 229.4 L1369.8 237.0Z" fill="#8fcbf6" />
<path d="M1335.4 345.2 L1331.4 344.2 L1330.8 335.4 L1337.0 330.9 L1342.8 336.3Z" fill="#8fcbf6" />
<path d="M1403.9 387.0 L1388.1 391.5 L1386.9 388.9 L1395.7 382.4 L1406.5 383.5Z" fill="#8fcbf6" />
<path d="M1213.2 327.0 L1215.0 321.1 L1224.9 320.6 L1226.1 328.0Z" fill="#8fcbf6" />
<path d="M1232.1 324.0 L1225.4 323.3 L1225.3 318.4 L1231.2 316.7 L1236.9 318.8Z" fill="#8fcbf6" />
<path d="M1271.0 265.7 L1272.0 259.4 L1275.7 263.5Z" fill="#8fcbf6" />
<path d="M1320.8 378.2 L1328.0 385.1 L1315.3 395.6 L1313.3 384.7Z" fill="#8fcbf6" />
<path d="M1322.7 302.6 L1336.6 300.3 L1335.1 309.3 L1325.5 310.6Z" fill="#8fcbf6" />
<path d="M1159.2 -0.4 L1152.6 9.9 L1152.7 -8.4Z" fill="#8fcbf6" />
<path d="M1137.5 44.7 L1131.5 50.4 L1129.2 47.5 L1133.1 42.4Z" fill="#8fcbf6" />
<path d="M1038.4 72.5 L1047.0 88.6 L1031.6 85.1 L1026.3 67.8Z" fill="#8fcbf6" />
<path d="M1208.1 4.7 L1206.0 21.2 L1185.8 26.2 L1195.0 10.1Z" fill="#8fcbf6" />
<path d="M1169.2 27.0 L1171.6 16.5 L1185.9 7.5 L1190.0 18.7Z" fill="#8fcbf6" />
<path d="M1201.1 109.8 L1190.8 107.1 L1199.0 97.7Z" fill="#8fcbf6" />
<path d="M1068.0 114.3 L1070.6 124.3 L1066.0 128.2 L1062.0 118.4Z" fill="#8fcbf6" />
<path d="M1013.5 185.2 L1019.7 174.0 L1024.6 176.4 L1025.3 187.8 L1017.8 193.2Z" fill="#8fcbf6" />
<path d="M1045.6 69.2 L1035.3 74.0 L1041.1 62.7Z" fill="#8fcbf6" />
<path d="M1157.8 108.6 L1154.5 117.8 L1135.4 105.2 L1133.0 99.1 L1150.9 101.7Z" fill="#8fcbf6" />
<path d="M1026.3 159.9 L1033.0 162.9 L1035.1 170.6 L1031.4 173.1 L1023.4 168.0Z" fill="#8fcbf6" />
<path d="M1191.3 52.7 L1187.6 42.2 L1191.1 29.1 L1197.8 32.4 L1197.2 49.7Z" fill="#8fcbf6" />
<path d="M911.7 89.7 L919.0 88.2 L915.5 95.9Z" fill="#8fcbf6" />
<path d="M983.8 183.3 L979.6 191.4 L968.9 191.2 L973.8 184.0Z" fill="#8fcbf6" />
<path d="M739.6 35.6 L734.8 31.2 L743.2 26.1Z" fill="#8fcbf6" />
<path d="M680.0 118.0 L696.3 107.2 L705.1 108.1 L702.4 114.5 L685.5 123.0Z" fill="#8fcbf6" />
<path d="M904.1 106.8 L902.1 99.1 L907.5 105.8Z" fill="#8fcbf6" />
<path d="M715.2 39.4 L719.5 36.4 L726.5 40.4 L723.5 45.9 L717.1 44.3Z" fill="#8fcbf6" />
<path d="M892.6 107.9 L891.7 105.9 L892.8 104.0 L896.2 104.4 L896.5 106.5Z" fill="#8fcbf6" />
<path d="M910.4 106.6 L906.4 103.7 L916.7 97.7 L921.6 99.4Z" fill="#8fcbf6" />
<path d="M890.4 147.6 L895.7 142.4 L896.1 149.5 L892.3 153.2Z" fill="#8fcbf6" />
<path d="M926.8 176.9 L935.0 172.4 L944.3 187.4Z" fill="#8fcbf6" />
<path d="M1814.8 482.5 L1811.2 475.7 L1813.7 471.7Z" fill="#8fcbf6" />
<path d="M1745.7 374.6 L1730.0 366.3 L1748.4 366.5Z" fill="#8fcbf6" />
<path d="M1871.9 391.8 L1867.8 391.6 L1868.4 388.5 L1870.7 387.4 L1873.1 388.8Z" fill="#8fcbf6" />
<path d="M1741.5 368.2 L1742.6 374.7 L1738.1 372.3Z" fill="#8fcbf6" />
<path d="M1850.9 446.5 L1860.4 463.2 L1842.9 452.8Z" fill="#8fcbf6" />
<path d="M1778.3 403.3 L1757.6 403.1 L1762.4 397.1Z" fill="#8fcbf6" />
<path d="M1873.6 393.3 L1869.1 406.5 L1865.1 398.8Z" fill="#8fcbf6" />
<path d="M100 243 L160 254 L162 235 L155 215 L1218 213 L1218 192 L1232 192 L1236 225 L1290 240 L1340 262 L1400 268 L1440 270 L1475 252 L1610 330 L1625 355 L1650 365 L1665 385 L1697 415 L1710 520 L1690 570 L1670 600 L1700 610 L1830 550 L1818 510 L2000 505" fill="none" stroke="#6f7f8c" stroke-width="1.9"/>
<path d="M392 213 L392 378" fill="none" stroke="#76858a" stroke-width="1.5" stroke-dasharray="7 6" opacity="0.85"/>
<path d="M430 213 L430 260 L455 300 L490 330 L495 380 L520 400 L545 440 L600 455 L618 435" fill="none" stroke="#76858a" stroke-width="1.5" stroke-dasharray="7 6" opacity="0.85"/>
<path d="M125 363 L160 370 L190 400 L250 395 L320 380 L395 378 L410 400 L385 470 L395 500 L395 590" fill="none" stroke="#76858a" stroke-width="1.5" stroke-dasharray="7 6" opacity="0.85"/>
<path d="M118 590 L618 590" fill="none" stroke="#76858a" stroke-width="1.5" stroke-dasharray="7 6" opacity="0.85"/>
<path d="M618 435 L618 640 L693 640" fill="none" stroke="#76858a" stroke-width="1.5" stroke-dasharray="7 6" opacity="0.85"/>
<path d="M618 435 L883 435" fill="none" stroke="#76858a" stroke-width="1.5" stroke-dasharray="7 6" opacity="0.85"/>
<path d="M883 213 L883 640" fill="none" stroke="#76858a" stroke-width="1.5" stroke-dasharray="7 6" opacity="0.85"/>
<path d="M883 383 L1165 383" fill="none" stroke="#76858a" stroke-width="1.5" stroke-dasharray="7 6" opacity="0.85"/>
<path d="M883 539 L1100 539 L1140 548 L1167 557 L1182 600 L1193 655 L1211 688 L1229 702 L1238 731 L1238 981" fill="none" stroke="#76858a" stroke-width="1.5" stroke-dasharray="7 6" opacity="0.85"/>
<path d="M618 640 L960 640 L960 689 L1205 689" fill="none" stroke="#76858a" stroke-width="1.5" stroke-dasharray="7 6" opacity="0.85"/>
<path d="M693 640 L693 1053" fill="none" stroke="#76858a" stroke-width="1.5" stroke-dasharray="7 6" opacity="0.85"/>
<path d="M960 689 L960 835" fill="none" stroke="#76858a" stroke-width="1.5" stroke-dasharray="7 6" opacity="0.85"/>
<path d="M505 590 L505 835" fill="none" stroke="#76858a" stroke-width="1.5" stroke-dasharray="7 6" opacity="0.85"/>
<path d="M505 835 L1238 835" fill="none" stroke="#76858a" stroke-width="1.5" stroke-dasharray="7 6" opacity="0.85"/>
<path d="M923 835 L923 1053" fill="none" stroke="#76858a" stroke-width="1.5" stroke-dasharray="7 6" opacity="0.85"/>
<path d="M923 858 L1035 858 L1037 945 L1058 956 L1091 969 L1127 978 L1182 980 L1245 981" fill="none" stroke="#76858a" stroke-width="1.5" stroke-dasharray="7 6" opacity="0.85"/>
<path d="M283 590 L283 720 L460 930 L475 960 L470 1000 L480 1040" fill="none" stroke="#76858a" stroke-width="1.5" stroke-dasharray="7 6" opacity="0.85"/>
<path d="M1147 213 L1150 260 L1160 300 L1165 383 L1165 513" fill="none" stroke="#76858a" stroke-width="1.5" stroke-dasharray="7 6" opacity="0.85"/>
<path d="M1165 513 L1510 513" fill="none" stroke="#76858a" stroke-width="1.5" stroke-dasharray="7 6" opacity="0.85"/>
<path d="M1193 658 L1360 658" fill="none" stroke="#76858a" stroke-width="1.5" stroke-dasharray="7 6" opacity="0.85"/>
<path d="M1300 400 L1310 440 L1330 470 L1375 513 L1360 560 L1340 620 L1360 655 L1395 700 L1410 760 L1435 800 L1440 852" fill="none" stroke="#76858a" stroke-width="1.5" stroke-dasharray="7 6" opacity="0.85"/>
<path d="M1506 637 L1506 760 L1480 800 L1440 830" fill="none" stroke="#76858a" stroke-width="1.5" stroke-dasharray="7 6" opacity="0.85"/>
<path d="M1609 604 L1609 735 L1570 780 L1520 790 L1490 800" fill="none" stroke="#76858a" stroke-width="1.5" stroke-dasharray="7 6" opacity="0.85"/>
<path d="M1506 604 L1665 604" fill="none" stroke="#76858a" stroke-width="1.5" stroke-dasharray="7 6" opacity="0.85"/>
<path d="M1770 582 L1770 702 L1745 740 L1700 760 L1680 790 L1720 820 L1760 852" fill="none" stroke="#76858a" stroke-width="1.5" stroke-dasharray="7 6" opacity="0.85"/>
<path d="M1770 704 L2000 704" fill="none" stroke="#76858a" stroke-width="1.5" stroke-dasharray="7 6" opacity="0.85"/>
<path d="M1440 852 L1944 852" fill="none" stroke="#76858a" stroke-width="1.5" stroke-dasharray="7 6" opacity="0.85"/>
<path d="M1400 927 L1700 927" fill="none" stroke="#76858a" stroke-width="1.5" stroke-dasharray="7 6" opacity="0.85"/>
<path d="M1484 927 L1484 1053" fill="none" stroke="#76858a" stroke-width="1.5" stroke-dasharray="7 6" opacity="0.85"/>
<path d="M1240 858 L1425 858" fill="none" stroke="#76858a" stroke-width="1.5" stroke-dasharray="7 6" opacity="0.85"/>
<path d="M1420 858 L1400 927 L1395 1053" fill="none" stroke="#76858a" stroke-width="1.5" stroke-dasharray="7 6" opacity="0.85"/>
<path d="M1245 858 L1245 1053" fill="none" stroke="#76858a" stroke-width="1.5" stroke-dasharray="7 6" opacity="0.85"/>
<path d="M363 0 L504 210" fill="none" stroke="#76858a" stroke-width="1.5" stroke-dasharray="7 6" opacity="0.85"/>
<path d="M657 0 L657 213" fill="none" stroke="#76858a" stroke-width="1.5" stroke-dasharray="7 6" opacity="0.85"/>
<path d="M975 0 L985 213" fill="none" stroke="#76858a" stroke-width="1.5" stroke-dasharray="7 6" opacity="0.85"/>
<path d="M1218 0 L1218 192" fill="none" stroke="#76858a" stroke-width="1.5" stroke-dasharray="7 6" opacity="0.85"/>
<path d="M1808 70 L1808 330 L1830 370 L1850 390" fill="none" stroke="#76858a" stroke-width="1.5" stroke-dasharray="7 6" opacity="0.85"/>
<path d="M380 1037 L480.5 1032.5 L477 1039.6 L509 1052" fill="none" stroke="#6f7f8c" stroke-width="1.9"/>
<text x="258" y="339" text-anchor="middle" font-size="32.6" letter-spacing="2.9" fill="#4f6b6e" stroke="#eaf5ee" stroke-width="7" stroke-opacity="0.7" paint-order="stroke" stroke-linejoin="round">WASHINGTON</text>
<text x="678" y="343" text-anchor="middle" font-size="32.6" letter-spacing="2.9" fill="#4f6b6e" stroke="#eaf5ee" stroke-width="7" stroke-opacity="0.7" paint-order="stroke" stroke-linejoin="round">MONTANA</text>
<text x="1024" y="298" text-anchor="middle" font-size="32.6" letter-spacing="2.9" fill="#4f6b6e" stroke="#eaf5ee" stroke-width="7" stroke-opacity="0.7" paint-order="stroke" stroke-linejoin="round">NORTH</text>
<text x="1026" y="332" text-anchor="middle" font-size="32.6" letter-spacing="2.9" fill="#4f6b6e" stroke="#eaf5ee" stroke-width="7" stroke-opacity="0.7" paint-order="stroke" stroke-linejoin="round">DAKOTA</text>
<text x="1240" y="382" text-anchor="middle" font-size="32.6" letter-spacing="2.9" fill="#4f6b6e" stroke="#eaf5ee" stroke-width="7" stroke-opacity="0.7" paint-order="stroke" stroke-linejoin="round">MINNESOTA</text>
<text x="1024" y="455" text-anchor="middle" font-size="32.6" letter-spacing="2.9" fill="#4f6b6e" stroke="#eaf5ee" stroke-width="7" stroke-opacity="0.7" paint-order="stroke" stroke-linejoin="round">SOUTH</text>
<text x="1026" y="489" text-anchor="middle" font-size="32.6" letter-spacing="2.9" fill="#4f6b6e" stroke="#eaf5ee" stroke-width="7" stroke-opacity="0.7" paint-order="stroke" stroke-linejoin="round">DAKOTA</text>
<text x="257" y="509" text-anchor="middle" font-size="32.6" letter-spacing="2.9" fill="#4f6b6e" stroke="#eaf5ee" stroke-width="7" stroke-opacity="0.7" paint-order="stroke" stroke-linejoin="round">OREGON</text>
<text x="500" y="526" text-anchor="middle" font-size="32.6" letter-spacing="2.9" fill="#4f6b6e" stroke="#eaf5ee" stroke-width="7" stroke-opacity="0.7" paint-order="stroke" stroke-linejoin="round">IDAHO</text>
<text x="750" y="551" text-anchor="middle" font-size="32.6" letter-spacing="2.9" fill="#4f6b6e" stroke="#eaf5ee" stroke-width="7" stroke-opacity="0.7" paint-order="stroke" stroke-linejoin="round">WYOMING</text>
<text x="1428" y="463" text-anchor="middle" font-size="32.6" letter-spacing="2.9" fill="#4f6b6e" stroke="#eaf5ee" stroke-width="7" stroke-opacity="0.7" paint-order="stroke" stroke-linejoin="round">WISCONSIN</text>
<text x="1614" y="508" text-anchor="middle" font-size="32.6" letter-spacing="2.9" fill="#4f6b6e" stroke="#eaf5ee" stroke-width="7" stroke-opacity="0.7" paint-order="stroke" stroke-linejoin="round">MICHIGAN</text>
<text x="1282" y="602" text-anchor="middle" font-size="32.6" letter-spacing="2.9" fill="#4f6b6e" stroke="#eaf5ee" stroke-width="7" stroke-opacity="0.7" paint-order="stroke" stroke-linejoin="round">IOWA</text>
<text x="1058" y="629" text-anchor="middle" font-size="32.6" letter-spacing="2.9" fill="#4f6b6e" stroke="#eaf5ee" stroke-width="7" stroke-opacity="0.7" paint-order="stroke" stroke-linejoin="round">NEBRASKA</text>
<text x="1432" y="654" text-anchor="middle" font-size="32.6" letter-spacing="2.9" fill="#4f6b6e" stroke="#eaf5ee" stroke-width="7" stroke-opacity="0.7" paint-order="stroke" stroke-linejoin="round">ILLINOIS</text>
<text x="1696" y="673" text-anchor="middle" font-size="32.6" letter-spacing="2.9" fill="#4f6b6e" stroke="#eaf5ee" stroke-width="7" stroke-opacity="0.7" paint-order="stroke" stroke-linejoin="round">OHIO</text>
<text x="1558" y="709" text-anchor="middle" font-size="32.6" letter-spacing="2.9" fill="#4f6b6e" stroke="#eaf5ee" stroke-width="7" stroke-opacity="0.7" paint-order="stroke" stroke-linejoin="round">INDIANA</text>
<text x="399" y="713" text-anchor="middle" font-size="32.6" letter-spacing="2.9" fill="#4f6b6e" stroke="#eaf5ee" stroke-width="7" stroke-opacity="0.7" paint-order="stroke" stroke-linejoin="round">NEVADA</text>
<text x="595" y="747" text-anchor="middle" font-size="32.6" letter-spacing="2.9" fill="#4f6b6e" stroke="#eaf5ee" stroke-width="7" stroke-opacity="0.7" paint-order="stroke" stroke-linejoin="round">UTAH</text>
<text x="828" y="767" text-anchor="middle" font-size="32.6" letter-spacing="2.9" fill="#4f6b6e" stroke="#eaf5ee" stroke-width="7" stroke-opacity="0.7" paint-order="stroke" stroke-linejoin="round">COLORADO</text>
<text x="1096" y="776" text-anchor="middle" font-size="32.6" letter-spacing="2.9" fill="#4f6b6e" stroke="#eaf5ee" stroke-width="7" stroke-opacity="0.7" paint-order="stroke" stroke-linejoin="round">KANSAS</text>
<text x="1318" y="784" text-anchor="middle" font-size="32.6" letter-spacing="2.9" fill="#4f6b6e" stroke="#eaf5ee" stroke-width="7" stroke-opacity="0.7" paint-order="stroke" stroke-linejoin="round">MISSOURI</text>
<text x="1755" y="760" text-anchor="middle" font-size="32.6" letter-spacing="2.9" fill="#4f6b6e" stroke="#eaf5ee" stroke-width="7" stroke-opacity="0.7" paint-order="stroke" stroke-linejoin="round">WEST</text>
<text x="1757" y="794" text-anchor="middle" font-size="32.6" letter-spacing="2.9" fill="#4f6b6e" stroke="#eaf5ee" stroke-width="7" stroke-opacity="0.7" paint-order="stroke" stroke-linejoin="round">VIRGINIA</text>
<text x="1602" y="839" text-anchor="middle" font-size="32.6" letter-spacing="2.9" fill="#4f6b6e" stroke="#eaf5ee" stroke-width="7" stroke-opacity="0.7" paint-order="stroke" stroke-linejoin="round">KENTUCKY</text>
<text x="1822" y="839" text-anchor="middle" font-size="32.6" letter-spacing="2.9" fill="#4f6b6e" stroke="#eaf5ee" stroke-width="7" stroke-opacity="0.7" paint-order="stroke" stroke-linejoin="round">VIRGINIA</text>
<text x="290" y="870" text-anchor="middle" font-size="32.6" letter-spacing="2.9" fill="#4f6b6e" stroke="#eaf5ee" stroke-width="7" stroke-opacity="0.7" paint-order="stroke" stroke-linejoin="round">CALIFORNIA</text>
<text x="1138" y="909" text-anchor="middle" font-size="32.6" letter-spacing="2.9" fill="#4f6b6e" stroke="#eaf5ee" stroke-width="7" stroke-opacity="0.7" paint-order="stroke" stroke-linejoin="round">OKLAHOMA</text>
<text x="1537" y="909" text-anchor="middle" font-size="32.6" letter-spacing="2.9" fill="#4f6b6e" stroke="#eaf5ee" stroke-width="7" stroke-opacity="0.7" paint-order="stroke" stroke-linejoin="round">TENNESSEE</text>
<text x="1830" y="895" text-anchor="middle" font-size="32.6" letter-spacing="2.9" fill="#4f6b6e" stroke="#eaf5ee" stroke-width="7" stroke-opacity="0.7" paint-order="stroke" stroke-linejoin="round">NORTH</text>
<text x="1832" y="929" text-anchor="middle" font-size="32.6" letter-spacing="2.9" fill="#4f6b6e" stroke="#eaf5ee" stroke-width="7" stroke-opacity="0.7" paint-order="stroke" stroke-linejoin="round">CAROLINA</text>
<text x="1322" y="953" text-anchor="middle" font-size="32.6" letter-spacing="2.9" fill="#4f6b6e" stroke="#eaf5ee" stroke-width="7" stroke-opacity="0.7" paint-order="stroke" stroke-linejoin="round">ARKANSAS</text>
<text x="595" y="972" text-anchor="middle" font-size="32.6" letter-spacing="2.9" fill="#4f6b6e" stroke="#eaf5ee" stroke-width="7" stroke-opacity="0.7" paint-order="stroke" stroke-linejoin="round">ARIZONA</text>
<text x="810" y="1000" text-anchor="middle" font-size="32.6" letter-spacing="2.9" fill="#4f6b6e" stroke="#eaf5ee" stroke-width="7" stroke-opacity="0.7" paint-order="stroke" stroke-linejoin="round">NEW MEXICO</text>
<text x="1422" y="1002" text-anchor="middle" font-size="32.6" letter-spacing="2.9" fill="#4f6b6e" stroke="#eaf5ee" stroke-width="7" stroke-opacity="0.7" paint-order="stroke" stroke-linejoin="round">MISSISSIPPI</text>
<text x="1773" y="987" text-anchor="middle" font-size="32.6" letter-spacing="2.9" fill="#4f6b6e" stroke="#eaf5ee" stroke-width="7" stroke-opacity="0.7" paint-order="stroke" stroke-linejoin="round">SOUTH</text>
<text x="1773" y="1022" text-anchor="middle" font-size="32.6" letter-spacing="2.9" fill="#4f6b6e" stroke="#eaf5ee" stroke-width="7" stroke-opacity="0.7" paint-order="stroke" stroke-linejoin="round">CAROLINA</text>
<text x="1535" y="1050" text-anchor="middle" font-size="32.6" letter-spacing="2.9" fill="#4f6b6e" stroke="#eaf5ee" stroke-width="7" stroke-opacity="0.7" paint-order="stroke" stroke-linejoin="round">ALABAMA</text>
<text x="1537" y="78" text-anchor="middle" font-size="32.6" letter-spacing="2.9" fill="#4f6b6e" stroke="#eaf5ee" stroke-width="7" stroke-opacity="0.7" paint-order="stroke" stroke-linejoin="round">ONTARIO</text>
<text x="1828" y="662" text-anchor="start" font-size="32.6" letter-spacing="2.9" fill="#4f6b6e" stroke="#eaf5ee" stroke-width="7" stroke-opacity="0.7" paint-order="stroke" stroke-linejoin="round">PENNSYLVANIA</text>
<text x="1848" y="557" text-anchor="start" font-size="32.6" letter-spacing="2.9" fill="#4f6b6e" stroke="#eaf5ee" stroke-width="7" stroke-opacity="0.7" paint-order="stroke" stroke-linejoin="round">NEW YORK</text>
<text x="988" y="720" text-anchor="middle" font-size="55" font-weight="700" letter-spacing="6.1" fill="#1b1f24" stroke="#f3f2e4" stroke-width="7" stroke-opacity="0.7" paint-order="stroke" stroke-linejoin="round">United States</text>
<text x="188" y="781" text-anchor="middle" font-size="36" fill="#202428" stroke="#f4f8f6" stroke-width="7.5" stroke-opacity="0.75" paint-order="stroke" stroke-linejoin="round">San Francisco</text>
<circle cx="190" cy="799" r="7" fill="#e4ece6" stroke="#2a2f33" stroke-width="3.2"/>
<text x="478" y="887" text-anchor="start" font-size="36" fill="#202428" stroke="#f4f8f6" stroke-width="7.5" stroke-opacity="0.75" paint-order="stroke" stroke-linejoin="round">Las Vegas</text>
<circle cx="463" cy="873" r="7" fill="#e4ece6" stroke="#2a2f33" stroke-width="3.2"/>
<text x="247" y="952" text-anchor="start" font-size="36" fill="#202428" stroke="#f4f8f6" stroke-width="7.5" stroke-opacity="0.75" paint-order="stroke" stroke-linejoin="round">Los Angeles</text>
<text x="403" y="1014" text-anchor="start" font-size="36" fill="#202428" stroke="#f4f8f6" stroke-width="7.5" stroke-opacity="0.75" paint-order="stroke" stroke-linejoin="round">San Diego</text>
<text x="1157" y="1010" text-anchor="middle" font-size="36" fill="#202428" stroke="#f4f8f6" stroke-width="7.5" stroke-opacity="0.75" paint-order="stroke" stroke-linejoin="round">Dallas</text>
<circle cx="1157" cy="1029" r="7" fill="#e4ece6" stroke="#2a2f33" stroke-width="3.2"/>
<text x="1427" y="578" text-anchor="start" font-size="36" fill="#202428" stroke="#f4f8f6" stroke-width="7.5" stroke-opacity="0.75" paint-order="stroke" stroke-linejoin="round">Chicago</text>
<text x="1815" y="485" text-anchor="middle" font-size="36" fill="#202428" stroke="#f4f8f6" stroke-width="7.5" stroke-opacity="0.75" paint-order="stroke" stroke-linejoin="round">Toronto</text>
<circle cx="1815" cy="506" r="7" fill="#e4ece6" stroke="#2a2f33" stroke-width="3.2"/>
<text x="1822" y="391" text-anchor="start" font-size="36" fill="#202428" stroke="#f4f8f6" stroke-width="7.5" stroke-opacity="0.75" paint-order="stroke" stroke-linejoin="round">Ottawa</text>
<circle cx="399" cy="957.5" r="81" fill="#fff"/><circle cx="399" cy="957.5" r="67" fill="#e4f0fe"/><circle cx="399" cy="957.5" r="53.5" fill="#000"/>
<text x="399" y="972.9" text-anchor="middle" font-size="37.3" font-weight="400" fill="#fff" stroke="#fff" stroke-width="1.1">8</text>
<circle cx="1445" cy="563" r="81" fill="#fff"/><circle cx="1445" cy="563" r="67" fill="#e4f0fe"/><circle cx="1445" cy="563" r="53.5" fill="#000"/>
<text x="1445" y="578.4" text-anchor="middle" font-size="37.3" font-weight="400" fill="#fff" stroke="#fff" stroke-width="1.1">8</text>
<circle cx="1685" cy="965.5" r="81" fill="#fff"/><circle cx="1685" cy="965.5" r="67" fill="#e4f0fe"/><circle cx="1685" cy="965.5" r="53.5" fill="#000"/>
<text x="1685" y="980.9" text-anchor="middle" font-size="37.3" font-weight="400" fill="#fff" stroke="#fff" stroke-width="1.1">3</text></svg>
<div class="abs" style="left:0;top:0;width:100%;height:100%;border-radius:27px;box-shadow:inset 0 0 0 1.5px rgba(0,0,0,0.16)"></div></div>

<!-- TABLE -->
<div id="table">
<div class="row sel" style="top:1862px;height:318px"></div>
<div class="abs" style="left:900px;top:1705px;width:2284px;height:3px;background:#b0b0b0"></div>
<div class="abs" style="left:900px;top:2020px;width:1852px;height:2px;background:#d6e2f1"></div><div class="abs" style="left:2752px;top:2018px;width:432px;height:2px;background:#d6e2f1"></div>
<div class="abs" style="left:900px;top:2178px;width:1852px;height:2px;background:#d6e2f1"></div><div class="abs" style="left:2752px;top:2176.5px;width:432px;height:2px;background:#d6e2f1"></div>
<div class="cb off" style="top:1625px"></div>
<div class="abs" style="left:938px;top:1645.7px;width:20px;height:5.8px;background:#111"></div>
<div class="t hd" style="left:1028px;top:1633px;letter-spacing:1.05px">Location name</div>
<div class="t hd" style="left:1284.5px;top:1633px;letter-spacing:1.37px">Address</div>
<div class="t hd" style="left:1749px;top:1633px;letter-spacing:1.5px">Location type</div>
<div class="t hd" style="left:2042px;top:1633px;letter-spacing:1.08px">Group</div>
<div class="t hd" style="left:2408px;top:1633px;letter-spacing:0.62px">Phone</div>
<div class="t hd" style="left:2772.5px;top:1633px;letter-spacing:0.0px">Email</div>
<svg class="abs" style="left:3118px;top:1632px;width:36px;height:36px" viewBox="0 0 36 36"><path d="M18 1V35M1 18H35" stroke="#111" stroke-width="4.6" fill="none"/></svg>
<div class="cb off" style="top:1762px"></div>
<div class="t b nm" style="left:1027.5px;top:1769.5px;letter-spacing:0.83px">Alpharetta</div>
<div class="t c1" style="left:1284px;top:1746.3px">50 Canton Street, Ste 101</div>
<div class="t c2" style="left:1284px;top:1798.5px">Alpharetta, GA 30009</div>
<div class="t cv" style="left:1749px;top:1769.5px">Physical</div>
<div class="t cv" style="left:2042px;top:1769.5px">Seasonal</div>
<div class="t cv" style="left:2405.5px;top:1769.5px;letter-spacing:0.25px">1-212-456-7890</div>
<div class="t cv" style="left:2772.5px;top:1769.5px">alpha@gmail.com</div>
<div class="cb on" style="top:1918.2px"></div><svg class="abs" style="left:923.5px;top:1918.2px;width:48px;height:48px" viewBox="0 0 48 48"><path d="M12.5 24.5 L20.5 32.5 L36 16.5" fill="none" stroke="#fff" stroke-width="5"/></svg>
<div class="t b nm" style="left:1027.5px;top:1926.5px;letter-spacing:0.34px">Aria Village</div>
<div class="t c1" style="left:1284px;top:1906.3px;letter-spacing:0.75px">6600 Alastair Dr #400</div>
<div class="t c2" style="left:1284px;top:1953.8px;letter-spacing:-0.5px">Sandy Springs, GA 30328</div>
<div class="t cv" style="left:1749px;top:1926.5px">Physical</div>
<div class="t cv" style="left:2405.5px;top:1926.5px;letter-spacing:0.25px">1-212-456-7890</div>
<div class="t cv" style="left:2772.5px;top:1926.5px">aria@gmail.com</div>
<div class="cb on" style="top:2076.3px"></div><svg class="abs" style="left:923.5px;top:2076.3px;width:48px;height:48px" viewBox="0 0 48 48"><path d="M12.5 24.5 L20.5 32.5 L36 16.5" fill="none" stroke="#fff" stroke-width="5"/></svg>
<div class="t b nm" style="left:1027.5px;top:2085px;letter-spacing:-0.26px">Brookhaven</div>
<div class="t c1" style="left:1284px;top:2064.8px">4260 Peachtree Rd Suite F</div>
<div class="t c2" style="left:1284px;top:2112.3px">Atlanta, GA 30305</div>
<div class="t cv" style="left:1749px;top:2085.0px">Physical</div>
<div class="t cv" style="left:2405.5px;top:2085.0px;letter-spacing:0.25px">1-212-456-7890</div>
<div class="t cv" style="left:2772.5px;top:2085.0px">brook@gmail.com</div>
</div>

<!-- MODAL -->
<div id="modal">
<div class="abs" style="left:2580px;top:120px;width:1140.5px;height:1229px;border-radius:28px;background:#fff;box-shadow:0 0 0 3.5px rgba(0,0,0,0.075),0 44px 60px -12px rgba(0,0,0,0.25),0 6px 36px rgba(0,0,0,0.07)"></div>
<div class="abs" style="left:2649px;top:171.5px;width:103px;height:103px;background:#f2f2f2;border-radius:12px"></div>
<svg class="abs" style="left:2683.3px;top:206.1px;width:34px;height:34px" viewBox="0 0 34 34"><path d="M4 4L30 30M30 4L4 30" stroke="#1a1a1a" stroke-width="4" fill="none"/></svg>
<div class="abs" style="left:3502.5px;top:171.5px;width:149px;height:103.5px;background:#000;border-radius:52px"></div>
<div class="t b" style="left:3539.5px;top:207.5px;font-size:34px;color:#fff">Next</div>
<div class="t b" style="left:2648.5px;top:336px;font-size:52px;letter-spacing:0px">Create group</div>

<div class="card" style="top:456px;height:172px"></div>
<div class="card" style="top:662px;height:172px;border:2.8px solid #000"></div>
<div class="card" style="top:870px;height:172px"></div>
<div class="card" style="top:1078px;height:220px"></div>
<div class="ibox" style="top:489px"><svg viewBox="0 0 85.5 85.5"><g fill="none" stroke="#1a1a1a" stroke-width="4.1"><circle cx="42.8" cy="29.4" r="6.7"/><circle cx="29.9" cy="55.6" r="6.7"/><circle cx="55.6" cy="55.6" r="6.7"/><path d="M42.8 36.1V42.8M29.9 48.9V42.8H55.6V48.9"/></g></svg></div>
<div class="ibox" style="top:696px"><svg viewBox="0 0 85.5 85.5"><g fill="none" stroke="#1a1a1a" stroke-width="4.1" stroke-linejoin="round"><rect x="30" y="32.8" width="25.6" height="29.6" rx="5"/><path d="M30.3 33.5L47 24.2Q51.6 22.2 51.6 27.5V32.8"/><path d="M36.6 43.1H49.5M36.6 51.8H49.5" stroke-linejoin="miter"/></g></svg></div>
<div class="ibox" style="top:904px"><svg viewBox="0 0 85.5 85.5"><g fill="none" stroke="#1a1a1a" stroke-width="4.1"><path d="M25.6 27.4H60L62.4 38.2H23.2Z"/><path d="M23.4 38.2A6.45 6.45 0 0 0 36.3 38.2A6.45 6.45 0 0 0 49.2 38.2A6.45 6.45 0 0 0 62.1 38.2"/><path d="M27.9 45.5V58.3H44.8V45.5M57.7 45.5V60.4"/></g></svg></div>
<div class="ibox" style="top:1111px"><svg viewBox="0 0 85.5 85.5"><g fill="#1a1a1a"><circle cx="26.8" cy="30.7" r="3.3"/><circle cx="26.8" cy="42.8" r="3.3"/><circle cx="26.8" cy="54.7" r="3.3"/><rect x="34" y="28.6" width="28.3" height="4.3"/><rect x="34" y="40.6" width="28.3" height="4.3"/><rect x="34" y="52.6" width="28.3" height="4.3"/></g></svg></div>
<div class="radio" style="top:487.5px"></div>
<div class="radio" style="top:694.5px;border:15px solid #000"></div>
<div class="radio" style="top:902.5px"></div>
<div class="radio" style="top:1110.5px"></div>
<div class="t ct" style="left:2803px;top:500px">Group by region</div>
<div class="t cs" style="left:2803px;top:556px">Template</div>
<div class="t ct" style="left:2803px;top:707px;letter-spacing:1.55px">Group by concept</div>
<div class="t cs" style="left:2803px;top:763px">Template</div>
<div class="t ct" style="left:2803px;top:915px">Group by entity</div>
<div class="t cs" style="left:2803px;top:971px">Template</div>
<div class="t ct" style="left:2803px;top:1123px">Custom group</div>
<div class="t cs" style="left:2803px;top:1178px">Locations in this group will need to be manually</div>
<div class="t cs" style="left:2803px;top:1222px">added or removed.</div>
</div>

</body>
</html>
